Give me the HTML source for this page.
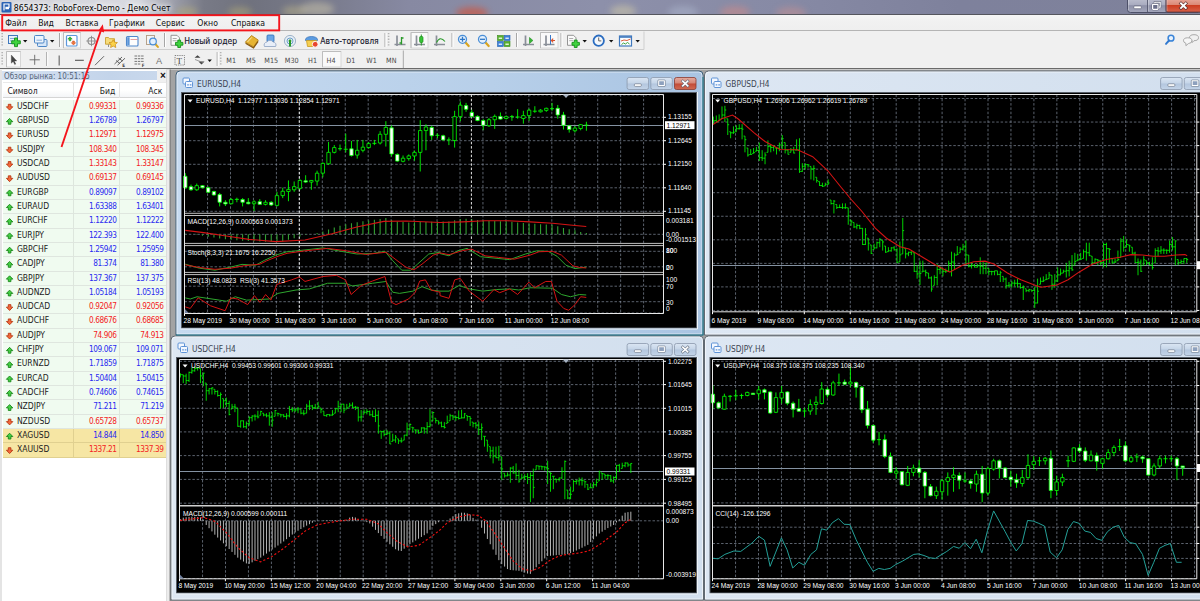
<!DOCTYPE html>
<html lang="ru"><head><meta charset="utf-8"><title>8654373: RoboForex-Demo - Демо Счет</title>
<style>
*{margin:0;padding:0;box-sizing:border-box}
html,body{width:1200px;height:601px;overflow:hidden;background:#f0f0f0}
body{position:relative;font-family:"DejaVu Sans Condensed","DejaVu Sans","Liberation Sans",sans-serif;font-size:8.53px;color:#000;-webkit-font-smoothing:antialiased}
#tbar{position:absolute;left:0;top:0;width:1200px;height:15px;background:linear-gradient(90deg,#d2d3da 0,#d8d9e0 11.5%,#9c9eaa 14.5%,#787a86 17%,#70727e 21%,#797b8c 27%,#8789a2 34%,#8d90aa 50%,#878aa5 65%,#7e819c 80%,#7f829b 100%);border-bottom:1.5px solid #55565e;overflow:hidden}
#tbar .blob{position:absolute;border-radius:50%;filter:blur(3px)}
#tbar .ttl{position:absolute;left:13.8px;top:2.1px;font-size:8.62px;line-height:12px;color:#000;white-space:nowrap;text-shadow:0 0 4px #fff,0 0 6px #fff,0 0 8px #fff}
#menu{position:absolute;left:0;top:15px;width:1200px;height:16px;background:linear-gradient(#f6f6f6,#f1f1f1 40%,#efefef);border-bottom:1px solid #b4b4b4}
#menu span{position:absolute;top:2.3px;font-size:8.65px;line-height:12px;color:#111;white-space:nowrap}
#tb{position:absolute;left:0;top:31px;width:1200px;height:38px;background:#f0f0f0;border-bottom:1px solid #6a6a6a}
.tl{position:absolute;font-size:8.53px;line-height:12px;color:#14142a;white-space:nowrap;-webkit-text-stroke:.12px #14142a}
.pl{position:absolute;top:54.2px;font-size:7px;line-height:10px;color:#4a4a4a;white-space:nowrap}
#mw{position:absolute;left:0;top:70px;width:166.5px;height:531px;background:#fff;border-left:2px solid #e4e4e4}
.mwh{position:absolute;left:0;top:.8px;width:155px;height:9.7px;background:linear-gradient(90deg,#d6e2f2,#c3d4ea 70%,#c9d8ec);overflow:hidden}
.mwh span{position:absolute;left:2px;top:-.2px;font-size:8px;line-height:11px;color:#56657a;white-space:nowrap}
.mwx{position:absolute;left:155px;top:-.5px;width:12px;height:12px;background:#f0f0f0;font-size:10px;line-height:12px;text-align:center;font-weight:bold;color:#111;font-family:"Liberation Sans",sans-serif}
.mwc{position:absolute;left:1px;top:11.5px;width:163.4px;height:16.5px;background:linear-gradient(#fff,#fff 50%,#f4f5f7);border-bottom:1px solid #d5d5d5;border-top:1px solid #e9e9e9}
.mwc span{position:absolute;top:3.3px;font-size:8.53px;line-height:11px;color:#222}
.mwc .c1{left:4.5px}
.mwc .c2{right:51px}
.mwc .c3{right:4px}
.mwc:before{content:"";position:absolute;left:69.5px;top:0;width:1px;height:15px;background:#e2e2e2}
.mwc:after{content:"";position:absolute;left:116px;top:0;width:1px;height:15px;background:#e2e2e2}
.r{position:absolute;left:1px;width:163.4px;height:14.3px;background:#f0fbf0;border-bottom:1px solid #dfe6df;font-size:8.53px;line-height:13.1px}
.r.gold{background:#f6e6a4;border-bottom-color:#e0d090}
.r span{position:absolute;top:0;white-space:nowrap}
.r .s{left:13.9px;color:#1c1c1c}
.r .b{right:50px}
.r .a{right:3px}
.r .b,.r .a{font-size:8.2px;letter-spacing:-.45px}
.r:before{content:"";position:absolute;left:69.5px;top:0;width:1px;height:14px;background:#dde6dd}
.r:after{content:"";position:absolute;left:116px;top:0;width:1px;height:14px;background:#dde6dd}
.r.gold:before,.r.gold:after{background:#e0d090}
.up .b,.up .a{color:#2a2af0}
.dn .b,.dn .a{color:#f32222}
#main{position:absolute;left:0;top:0;width:1200px;height:601px}
</style></head><body>
<div id="tbar"><div class="blob" style="left:176px;top:7px;width:22px;height:10px;background:#b4ab78;opacity:.55"></div><div class="blob" style="left:228px;top:7px;width:24px;height:10px;background:#b4ab78;opacity:.5"></div><div class="blob" style="left:282px;top:6px;width:24px;height:10px;background:#bdb58a;opacity:.5"></div><div class="blob" style="left:300px;top:2px;width:34px;height:14px;background:#d8d0b0;opacity:.45"></div><div class="blob" style="left:456px;top:7px;width:32px;height:12px;background:#c85a48;opacity:.75"></div><div class="blob" style="left:610px;top:5px;width:26px;height:12px;background:#cfc8a8;opacity:.55"></div><div class="blob" style="left:668px;top:6px;width:30px;height:12px;background:#a8b0c8;opacity:.6"></div><div class="blob" style="left:720px;top:6px;width:30px;height:12px;background:#c88a8a;opacity:.6"></div><div class="blob" style="left:776px;top:7px;width:30px;height:12px;background:#c89090;opacity:.5"></div><div class="ttl">8654373: RoboForex-Demo - Демо Счет</div></div>
<div id="menu">
<span style="left:5.2px">Файл</span>
<span style="left:38.2px">Вид</span>
<span style="left:65.6px">Вставка</span>
<span style="left:109.1px">Графики</span>
<span style="left:155.8px">Сервис</span>
<span style="left:197.3px">Окно</span>
<span style="left:230.9px">Справка</span>
</div>
<div id="tb"></div>
<div class="tl" style="left:184.3px;top:35px">Новый ордер</div>
<div class="tl" style="left:320.3px;top:35px">Авто-торговля</div>
<div id="mw">
<div class="mwh"><span>Обзор рынка: 10:51:15</span></div><div class="mwx">×</div>
<div class="mwc"><span class="c1">Символ</span><span class="c2">Бид</span><span class="c3">Аск</span></div>
<div class="r dn" style="top:29.8px"><span class="s">USDCHF</span><span class="b">0.99331</span><span class="a">0.99336</span></div>
<div class="r up" style="top:44.11px"><span class="s">GBPUSD</span><span class="b">1.26789</span><span class="a">1.26797</span></div>
<div class="r dn" style="top:58.42px"><span class="s">EURUSD</span><span class="b">1.12971</span><span class="a">1.12975</span></div>
<div class="r dn" style="top:72.73px"><span class="s">USDJPY</span><span class="b">108.340</span><span class="a">108.345</span></div>
<div class="r dn" style="top:87.04px"><span class="s">USDCAD</span><span class="b">1.33143</span><span class="a">1.33147</span></div>
<div class="r dn" style="top:101.35px"><span class="s">AUDUSD</span><span class="b">0.69137</span><span class="a">0.69145</span></div>
<div class="r up" style="top:115.66px"><span class="s">EURGBP</span><span class="b">0.89097</span><span class="a">0.89102</span></div>
<div class="r up" style="top:129.97px"><span class="s">EURAUD</span><span class="b">1.63388</span><span class="a">1.63401</span></div>
<div class="r up" style="top:144.28px"><span class="s">EURCHF</span><span class="b">1.12220</span><span class="a">1.12222</span></div>
<div class="r up" style="top:158.59px"><span class="s">EURJPY</span><span class="b">122.393</span><span class="a">122.400</span></div>
<div class="r up" style="top:172.9px"><span class="s">GBPCHF</span><span class="b">1.25942</span><span class="a">1.25959</span></div>
<div class="r up" style="top:187.21px"><span class="s">CADJPY</span><span class="b">81.374</span><span class="a">81.380</span></div>
<div class="r up" style="top:201.52px"><span class="s">GBPJPY</span><span class="b">137.367</span><span class="a">137.375</span></div>
<div class="r up" style="top:215.83px"><span class="s">AUDNZD</span><span class="b">1.05184</span><span class="a">1.05193</span></div>
<div class="r dn" style="top:230.14px"><span class="s">AUDCAD</span><span class="b">0.92047</span><span class="a">0.92056</span></div>
<div class="r dn" style="top:244.45px"><span class="s">AUDCHF</span><span class="b">0.68676</span><span class="a">0.68685</span></div>
<div class="r dn" style="top:258.76px"><span class="s">AUDJPY</span><span class="b">74.906</span><span class="a">74.913</span></div>
<div class="r up" style="top:273.07px"><span class="s">CHFJPY</span><span class="b">109.067</span><span class="a">109.071</span></div>
<div class="r up" style="top:287.38px"><span class="s">EURNZD</span><span class="b">1.71859</span><span class="a">1.71875</span></div>
<div class="r up" style="top:301.69px"><span class="s">EURCAD</span><span class="b">1.50404</span><span class="a">1.50415</span></div>
<div class="r up" style="top:316px"><span class="s">CADCHF</span><span class="b">0.74606</span><span class="a">0.74615</span></div>
<div class="r up" style="top:330.31px"><span class="s">NZDJPY</span><span class="b">71.211</span><span class="a">71.219</span></div>
<div class="r dn" style="top:344.62px"><span class="s">NZDUSD</span><span class="b">0.65728</span><span class="a">0.65737</span></div>
<div class="r up gold" style="top:358.93px"><span class="s">XAGUSD</span><span class="b">14.844</span><span class="a">14.850</span></div>
<div class="r dn gold" style="top:373.24px"><span class="s">XAUUSD</span><span class="b">1337.21</span><span class="a">1337.39</span></div>
</div>
<svg id="main" width="1200" height="601" viewBox="0 0 1200 601">
<defs><linearGradient id="gTClose" x1="0" y1="0" x2="0" y2="1"><stop offset="0" stop-color="#eab0a4"/><stop offset=".5" stop-color="#dc8a78"/><stop offset=".56" stop-color="#cc3c20"/><stop offset="1" stop-color="#d8624a"/></linearGradient><linearGradient id="gTBtn" x1="0" y1="0" x2="0" y2="1"><stop offset="0" stop-color="#c2c4d2"/><stop offset=".5" stop-color="#a9acc0"/><stop offset=".56" stop-color="#8e91a8"/><stop offset="1" stop-color="#a4a7bc"/></linearGradient></defs>
<defs>
<linearGradient id="gAct" x1="0" y1="0" x2="1" y2="0"><stop offset="0" stop-color="#c6daf0"/><stop offset=".6" stop-color="#b7cfe9"/><stop offset="1" stop-color="#a9c4e2"/></linearGradient>
<linearGradient id="gIn" x1="0" y1="0" x2="1" y2="0"><stop offset="0" stop-color="#dde7f3"/><stop offset="1" stop-color="#d2dfee"/></linearGradient>
<linearGradient id="gClose" x1="0" y1="0" x2="0" y2="1"><stop offset="0" stop-color="#e4aa9e"/><stop offset=".48" stop-color="#d58574"/><stop offset=".52" stop-color="#c24a36"/><stop offset="1" stop-color="#d06a52"/></linearGradient>
<linearGradient id="gBtn" x1="0" y1="0" x2="0" y2="1"><stop offset="0" stop-color="#dbe6f3"/><stop offset=".48" stop-color="#c5d5e8"/><stop offset=".52" stop-color="#b3c6de"/><stop offset="1" stop-color="#c3d4e8"/></linearGradient>
</defs>
<rect x="166.5" y="69.5" width="1034" height="532" fill="#a3a3a3"/>
<rect x="166.5" y="69.5" width="3.2" height="532" fill="#ececec"/>
<rect x="169.7" y="69.5" width="1" height="532" fill="#7a7a7a"/>
<path d="M171 600V340Q171 336 175 336H699.5Q703.5 336 703.5 340V600z" fill="url(#gIn)" stroke="#626a72" stroke-width="1"/>
<path d="M172 599V340.5Q172 337 175.5 337H699Q702.5 337 702.5 340.5V599z" fill="none" stroke="#fff" stroke-opacity=".55" stroke-width="1"/>
<rect x="176.5" y="357.5" width="520" height="235.5" fill="#000" stroke="#555c66" stroke-width="1"/>
<path d="M697.5 357v237h-522" stroke="#eef3f8" stroke-width="1" fill="none"/>
<rect x="178" y="343" width="6.5" height="6" rx="1" fill="#f4f8ff" stroke="#5f93d6" stroke-width="1"/>
<rect x="180.5" y="346.5" width="7" height="6" rx="1" fill="#f4f8ff" stroke="#5f93d6" stroke-width="1"/>
<path d="M182.2 349.8h1.6m1 0h1.6" stroke="#5f93d6" stroke-width="1.2"/>
<text x="192" y="351.8" font-size="8.3" fill="#3c4654" text-anchor="start" font-family="DejaVu Sans Condensed,DejaVu Sans,sans-serif">USDCHF,H4</text>
<rect x="674.5" y="343.5" width="21.5" height="12" rx="2" fill="url(#gBtn)" stroke="#8a98ac" stroke-width=".8"/>
<path d="M682.75 347.2l5 4.6m0 -4.6l-5 4.6" stroke="#5a6678" stroke-width="2.6" stroke-linecap="square"/>
<path d="M682.75 347.2l5 4.6m0 -4.6l-5 4.6" stroke="#fff" stroke-width="1.6" stroke-linecap="square"/>
<rect x="650.8" y="343.5" width="21.5" height="12" rx="2" fill="url(#gBtn)" stroke="#8a98ac" stroke-width=".8"/>
<rect x="658.55" y="346.7" width="6" height="5" rx=".6" fill="#8da0bd" stroke="#fff" stroke-width="1.3"/>
<rect x="657.75" y="345.9" width="7.6" height="6.6" rx="1" fill="none" stroke="#5a6678" stroke-width=".5"/>
<rect x="627.1" y="343.5" width="21.5" height="12" rx="2" fill="url(#gBtn)" stroke="#8a98ac" stroke-width=".8"/>
<rect x="634.35" y="349.8" width="7" height="2.6" rx="1" fill="#fff" stroke="#5a6678" stroke-width=".6"/>
<path d="M704.5 600V340Q704.5 336 708.5 336H1219.5Q1223.5 336 1223.5 340V600z" fill="url(#gIn)" stroke="#626a72" stroke-width="1"/>
<path d="M705.5 599V340.5Q705.5 337 709 337H1219Q1222.5 337 1222.5 340.5V599z" fill="none" stroke="#fff" stroke-opacity=".55" stroke-width="1"/>
<rect x="710" y="357.5" width="501" height="235.5" fill="#000" stroke="#555c66" stroke-width="1"/>
<path d="M1212 357v237h-503" stroke="#eef3f8" stroke-width="1" fill="none"/>
<rect x="711.5" y="343" width="6.5" height="6" rx="1" fill="#f4f8ff" stroke="#5f93d6" stroke-width="1"/>
<rect x="714" y="346.5" width="7" height="6" rx="1" fill="#f4f8ff" stroke="#5f93d6" stroke-width="1"/>
<path d="M715.7 349.8h1.6m1 0h1.6" stroke="#5f93d6" stroke-width="1.2"/>
<text x="725.5" y="351.8" font-size="8.3" fill="#3c4654" text-anchor="start" font-family="DejaVu Sans Condensed,DejaVu Sans,sans-serif">USDJPY,H4</text>
<rect x="1184.3" y="343.5" width="21.5" height="12" rx="2" fill="url(#gBtn)" stroke="#8a98ac" stroke-width=".8"/>
<rect x="1192.05" y="346.7" width="6" height="5" rx=".6" fill="#8da0bd" stroke="#fff" stroke-width="1.3"/>
<rect x="1191.25" y="345.9" width="7.6" height="6.6" rx="1" fill="none" stroke="#5a6678" stroke-width=".5"/>
<rect x="1160.6" y="343.5" width="21.5" height="12" rx="2" fill="url(#gBtn)" stroke="#8a98ac" stroke-width=".8"/>
<rect x="1167.85" y="349.8" width="7" height="2.6" rx="1" fill="#fff" stroke="#5a6678" stroke-width=".6"/>
<path d="M704.5 335V75Q704.5 71 708.5 71H1219.5Q1223.5 71 1223.5 75V335z" fill="url(#gIn)" stroke="#626a72" stroke-width="1"/>
<path d="M705.5 334V75.5Q705.5 72 709 72H1219Q1222.5 72 1222.5 75.5V334z" fill="none" stroke="#fff" stroke-opacity=".55" stroke-width="1"/>
<rect x="710" y="92.5" width="501" height="235.5" fill="#000" stroke="#555c66" stroke-width="1"/>
<path d="M1212 92v237h-503" stroke="#eef3f8" stroke-width="1" fill="none"/>
<rect x="711.5" y="78" width="6.5" height="6" rx="1" fill="#f4f8ff" stroke="#5f93d6" stroke-width="1"/>
<rect x="714" y="81.5" width="7" height="6" rx="1" fill="#f4f8ff" stroke="#5f93d6" stroke-width="1"/>
<path d="M715.7 84.8h1.6m1 0h1.6" stroke="#5f93d6" stroke-width="1.2"/>
<text x="725.5" y="86.8" font-size="8.3" fill="#3c4654" text-anchor="start" font-family="DejaVu Sans Condensed,DejaVu Sans,sans-serif">GBPUSD,H4</text>
<rect x="1184.3" y="77.5" width="21.5" height="12" rx="2" fill="url(#gBtn)" stroke="#8a98ac" stroke-width=".8"/>
<rect x="1192.05" y="80.7" width="6" height="5" rx=".6" fill="#8da0bd" stroke="#fff" stroke-width="1.3"/>
<rect x="1191.25" y="79.9" width="7.6" height="6.6" rx="1" fill="none" stroke="#5a6678" stroke-width=".5"/>
<rect x="1160.6" y="77.5" width="21.5" height="12" rx="2" fill="url(#gBtn)" stroke="#8a98ac" stroke-width=".8"/>
<rect x="1167.85" y="83.8" width="7" height="2.6" rx="1" fill="#fff" stroke="#5a6678" stroke-width=".6"/>
<path d="M176 335V75Q176 71 180 71H699Q703 71 703 75V335z" fill="url(#gAct)" stroke="#3f5f78" stroke-width="1"/>
<path d="M177 334V75.5Q177 72 180.5 72H698.5Q702 72 702 75.5V334z" fill="none" stroke="#fff" stroke-opacity=".55" stroke-width="1"/>
<path d="M176 335H703V77" fill="none" stroke="#2b7f90" stroke-width="1.2"/>
<rect x="181.5" y="92.5" width="515" height="235.5" fill="#000" stroke="#555c66" stroke-width="1"/>
<path d="M697.5 92v237h-517" stroke="#eef3f8" stroke-width="1" fill="none"/>
<rect x="183" y="78" width="6.5" height="6" rx="1" fill="#f4f8ff" stroke="#5f93d6" stroke-width="1"/>
<rect x="185.5" y="81.5" width="7" height="6" rx="1" fill="#f4f8ff" stroke="#5f93d6" stroke-width="1"/>
<path d="M187.2 84.8h1.6m1 0h1.6" stroke="#5f93d6" stroke-width="1.2"/>
<text x="197" y="86.8" font-size="8.3" fill="#3c4654" text-anchor="start" font-family="DejaVu Sans Condensed,DejaVu Sans,sans-serif">EURUSD,H4</text>
<rect x="674.5" y="77.5" width="21.5" height="12" rx="2" fill="url(#gClose)" stroke="#8a3a30" stroke-width=".8"/>
<path d="M682.75 81.2l5 4.6m0 -4.6l-5 4.6" stroke="#5a6678" stroke-width="2.6" stroke-linecap="square"/>
<path d="M682.75 81.2l5 4.6m0 -4.6l-5 4.6" stroke="#fff" stroke-width="1.6" stroke-linecap="square"/>
<rect x="650.8" y="77.5" width="21.5" height="12" rx="2" fill="url(#gBtn)" stroke="#8a98ac" stroke-width=".8"/>
<rect x="658.55" y="80.7" width="6" height="5" rx=".6" fill="#8da0bd" stroke="#fff" stroke-width="1.3"/>
<rect x="657.75" y="79.9" width="7.6" height="6.6" rx="1" fill="none" stroke="#5a6678" stroke-width=".5"/>
<rect x="627.1" y="77.5" width="21.5" height="12" rx="2" fill="url(#gBtn)" stroke="#8a98ac" stroke-width=".8"/>
<rect x="634.35" y="83.8" width="7" height="2.6" rx="1" fill="#fff" stroke="#5a6678" stroke-width=".6"/>
<g font-family='&quot;Liberation Sans&quot;,sans-serif'>
<path d="M202.55 359.5V578.8 M225.5 359.5V578.8 M248.45 359.5V578.8 M271.4 359.5V578.8 M294.35 359.5V578.8 M317.3 359.5V578.8 M340.25 359.5V578.8 M363.2 359.5V578.8 M386.15 359.5V578.8 M409.1 359.5V578.8 M432.05 359.5V578.8 M455 359.5V578.8 M477.95 359.5V578.8 M500.9 359.5V578.8 M523.85 359.5V578.8 M546.8 359.5V578.8 M569.75 359.5V578.8 M592.7 359.5V578.8 M615.65 359.5V578.8 M638.6 359.5V578.8" stroke="#8c98a8" stroke-width=".9" stroke-dasharray="2.5 1.8" fill="none" opacity=".72"/>
<path d="M179.5 361.3H663.5 M179.5 384.6H663.5 M179.5 408.3H663.5 M179.5 431.9H663.5 M179.5 455.6H663.5 M179.5 479.4H663.5 M179.5 503.2H663.5 M179.5 520.8H663.5 M179.5 578.5H663.5" stroke="#8c98a8" stroke-width=".9" stroke-dasharray="2.5 1.8" fill="none" opacity=".72"/>
<path d="M179.5 471.5H663.5" stroke="#8492a2" stroke-width="1"/>
<path d="M180.4 373.3V377.45 M180.4 375.37h-1.4 M180.4 374.64h1.4 M183.27 374.75V383.07 M183.27 374.75h-1.4 M183.27 376h1.4 M186.14 373.71V384.11 M186.14 376h-1.4 M186.14 380.48h1.4 M189.01 371.63V382.03 M189.01 380.48h-1.4 M189.01 372.38h1.4 M191.88 367.47V373.71 M191.88 372.38h-1.4 M191.88 370.82h1.4 M194.75 366.43V371.63 M194.75 370.82h-1.4 M194.75 368.34h1.4 M197.61 367.47V370.59 M197.61 368.34h-1.4 M197.61 367.65h1.4 M200.48 368.51V383.07 M200.48 368.51h-1.4 M200.48 375.9h1.4 M203.35 372.67V386.19 M203.35 375.9h-1.4 M203.35 373.18h1.4 M206.22 383.07V400.74 M206.22 383.07h-1.4 M206.22 390.73h1.4 M209.09 388.26V394.5 M209.09 390.73h-1.4 M209.09 388.7h1.4 M211.96 387.22V394.5 M211.96 388.7h-1.4 M211.96 387.88h1.4 M214.83 389.3V394.5 M214.83 389.3h-1.4 M214.83 391.51h1.4 M217.7 390.34V396.58 M217.7 391.51h-1.4 M217.7 395.5h1.4 M220.57 392.42V408.64 M220.57 395.5h-1.4 M220.57 394.43h1.4 M223.44 398.66V408.01 M223.44 398.66h-1.4 M223.44 400.75h1.4 M226.3 397.62V406.98 M226.3 400.75h-1.4 M226.3 403.49h1.4 M229.17 400.74V415.29 M229.17 403.49h-1.4 M229.17 414.53h1.4 M232.04 403.86V409.05 M232.04 409.05h-1.4 M232.04 406.86h1.4 M234.91 403.86V412.17 M234.91 406.86h-1.4 M234.91 407.16h1.4 M237.78 408.01V426.73 M237.78 408.01h-1.4 M237.78 426.28h1.4 M240.65 420.49V427.77 M240.65 426.28h-1.4 M240.65 420.83h1.4 M243.52 420.49V427.77 M243.52 420.83h-1.4 M243.52 426.74h1.4 M246.39 421.53V428.8 M246.39 426.74h-1.4 M246.39 423.64h1.4 M249.26 416.33V425.69 M249.26 423.64h-1.4 M249.26 417.68h1.4 M252.12 415.29V421.53 M252.12 417.68h-1.4 M252.12 416.03h1.4 M254.99 414.25V420.49 M254.99 416.03h-1.4 M254.99 416.18h1.4 M257.86 410.72V418.41 M257.86 416.18h-1.4 M257.86 417h1.4 M260.73 410.72V415.29 M260.73 415.29h-1.4 M260.73 411.54h1.4 M263.6 413.21V416.33 M263.6 413.21h-1.4 M263.6 415.03h1.4 M266.47 413.21V417.37 M266.47 415.03h-1.4 M266.47 415.87h1.4 M269.34 412.17V425.69 M269.34 415.87h-1.4 M269.34 417.2h1.4 M272.21 412.17V426.73 M272.21 417.2h-1.4 M272.21 420.14h1.4 M275.08 410.09V416.33 M275.08 416.33h-1.4 M275.08 410.49h1.4 M277.95 413.21V416.33 M277.95 413.21h-1.4 M277.95 413.4h1.4 M280.82 414.25V417.37 M280.82 414.25h-1.4 M280.82 414.89h1.4 M283.68 414.25V417.37 M283.68 414.89h-1.4 M283.68 416.37h1.4 M286.55 413.21V419.45 M286.55 416.37h-1.4 M286.55 415.88h1.4 M289.42 405.94V417.37 M289.42 415.88h-1.4 M289.42 409.53h1.4 M292.29 406.98V412.17 M292.29 409.53h-1.4 M292.29 410.02h1.4 M295.16 408.01V412.17 M295.16 410.02h-1.4 M295.16 409.9h1.4 M298.03 406.98V413.21 M298.03 409.9h-1.4 M298.03 408.84h1.4 M300.9 409.05V414.25 M300.9 409.05h-1.4 M300.9 413.18h1.4 M303.77 410.09V415.29 M303.77 413.18h-1.4 M303.77 413.73h1.4 M306.64 403.86V413.21 M306.64 413.21h-1.4 M306.64 406.14h1.4 M309.51 400.32V410.09 M309.51 406.14h-1.4 M309.51 405.94h1.4 M312.37 404.9V410.09 M312.37 405.94h-1.4 M312.37 407.63h1.4 M315.24 403.86V409.05 M315.24 407.63h-1.4 M315.24 408.41h1.4 M318.11 401.78V408.01 M318.11 408.01h-1.4 M318.11 406.33h1.4 M320.98 408.01V413.21 M320.98 408.01h-1.4 M320.98 409.51h1.4 M323.85 411.13V415.71 M323.85 411.13h-1.4 M323.85 415.62h1.4 M326.72 414.25V416.95 M326.72 415.62h-1.4 M326.72 414.57h1.4 M329.59 414.25V416.33 M329.59 414.57h-1.4 M329.59 415.12h1.4 M332.46 410.09V415.71 M332.46 415.12h-1.4 M332.46 414.34h1.4 M335.33 408.01V413.21 M335.33 413.21h-1.4 M335.33 408.8h1.4 M338.2 400.74V412.17 M338.2 408.8h-1.4 M338.2 406.33h1.4 M341.06 403.86V412.17 M341.06 406.33h-1.4 M341.06 404.18h1.4 M343.93 403.86V413.21 M343.93 404.18h-1.4 M343.93 410.11h1.4 M346.8 403.86V409.05 M346.8 409.05h-1.4 M346.8 407.83h1.4 M349.67 402.82V406.98 M349.67 406.98h-1.4 M349.67 405.2h1.4 M352.54 402.4V408.01 M352.54 405.2h-1.4 M352.54 407.32h1.4 M355.41 405.94V410.09 M355.41 407.32h-1.4 M355.41 407.24h1.4 M358.28 406.98V421.53 M358.28 407.24h-1.4 M358.28 417.09h1.4 M361.15 410.09V421.53 M361.15 417.09h-1.4 M361.15 416.89h1.4 M364.02 409.47V414.25 M364.02 414.25h-1.4 M364.02 412.24h1.4 M366.89 409.19V414.35 M366.89 412.24h-1.4 M366.89 411.55h1.4 M369.75 410.48V415.65 M369.75 411.55h-1.4 M369.75 414.82h1.4 M372.62 410.48V416.94 M372.62 414.82h-1.4 M372.62 416.58h1.4 M375.49 409.19V422.1 M375.49 416.58h-1.4 M375.49 415.31h1.4 M378.36 410.48V433.71 M378.36 415.31h-1.4 M378.36 425.91h1.4 M381.23 431.13V438.87 M381.23 431.13h-1.4 M381.23 431.6h1.4 M384.1 429.84V436.29 M384.1 431.6h-1.4 M384.1 434.36h1.4 M386.97 429.84V435 M386.97 434.36h-1.4 M386.97 433.18h1.4 M389.84 431.13V444.03 M389.84 433.18h-1.4 M389.84 443.94h1.4 M392.71 433.71V441.45 M392.71 441.45h-1.4 M392.71 440.07h1.4 M395.58 435V442.74 M395.58 440.07h-1.4 M395.58 437.2h1.4 M398.44 438.87V444.03 M398.44 438.87h-1.4 M398.44 440.86h1.4 M401.31 437.58V442.74 M401.31 440.86h-1.4 M401.31 441.03h1.4 M404.18 435V440.16 M404.18 440.16h-1.4 M404.18 435.12h1.4 M407.05 422.61V436.29 M407.05 435.12h-1.4 M407.05 428.93h1.4 M409.92 423.39V429.84 M409.92 428.93h-1.4 M409.92 424.47h1.4 M412.79 427.26V432.42 M412.79 427.26h-1.4 M412.79 427.86h1.4 M415.66 429.84V433.71 M415.66 429.84h-1.4 M415.66 430.07h1.4 M418.53 429.84V433.71 M418.53 430.07h-1.4 M418.53 432.81h1.4 M421.4 427.26V432.42 M421.4 432.42h-1.4 M421.4 427.93h1.4 M424.27 427.26V433.71 M424.27 427.93h-1.4 M424.27 428.86h1.4 M427.13 422.1V433.71 M427.13 428.86h-1.4 M427.13 426.64h1.4 M430 409.19V427.26 M430 426.64h-1.4 M430 424.94h1.4 M432.87 411.77V420.81 M432.87 420.81h-1.4 M432.87 412.5h1.4 M435.74 418.23V423.39 M435.74 418.23h-1.4 M435.74 420.54h1.4 M438.61 420.81V424.68 M438.61 420.81h-1.4 M438.61 422.93h1.4 M441.48 421.58V427.26 M441.48 422.93h-1.4 M441.48 426.6h1.4 M444.35 422.1V428.55 M444.35 426.6h-1.4 M444.35 427.38h1.4 M447.22 415.65V423.39 M447.22 423.39h-1.4 M447.22 422.33h1.4 M450.09 413.84V420.81 M450.09 420.81h-1.4 M450.09 415.78h1.4 M452.96 414.87V420.03 M452.96 415.78h-1.4 M452.96 417.01h1.4 M455.82 415.65V420.81 M455.82 417.01h-1.4 M455.82 417.5h1.4 M458.69 410.48V419.52 M458.69 417.5h-1.4 M458.69 418.47h1.4 M461.56 409.71V418.23 M461.56 418.23h-1.4 M461.56 417.87h1.4 M464.43 413.06V418.23 M464.43 417.87h-1.4 M464.43 413.84h1.4 M467.3 415.65V420.81 M467.3 415.65h-1.4 M467.3 416.55h1.4 M470.17 416.42V425.97 M470.17 416.55h-1.4 M470.17 418.63h1.4 M473.04 422.1V427.26 M473.04 422.1h-1.4 M473.04 423.3h1.4 M475.91 422.1V428.55 M475.91 423.3h-1.4 M475.91 425.23h1.4 M478.78 421.58V435 M478.78 425.23h-1.4 M478.78 429.49h1.4 M481.65 423.39V440.16 M481.65 429.49h-1.4 M481.65 427.79h1.4 M484.51 436.29V446.61 M484.51 436.29h-1.4 M484.51 436.33h1.4 M487.38 440.16V451.77 M487.38 440.16h-1.4 M487.38 445.03h1.4 M490.25 446.61V458.23 M490.25 446.61h-1.4 M490.25 450.9h1.4 M493.12 446.61V463.39 M493.12 450.9h-1.4 M493.12 456.11h1.4 M495.99 446.61V458.23 M495.99 456.11h-1.4 M495.99 457.68h1.4 M498.86 445.84V460.81 M498.86 457.68h-1.4 M498.86 456.17h1.4 M501.73 456.94V480.16 M501.73 456.94h-1.4 M501.73 468.91h1.4 M504.6 473.19V477.58 M504.6 473.19h-1.4 M504.6 475.9h1.4 M507.47 472.42V476.29 M507.47 475.9h-1.4 M507.47 475.04h1.4 M510.34 467.26V482.74 M510.34 475.04h-1.4 M510.34 468.09h1.4 M513.2 465.97V473.71 M513.2 468.09h-1.4 M513.2 472.93h1.4 M516.07 463.39V478.87 M516.07 472.93h-1.4 M516.07 475.46h1.4 M518.94 469.84V482.74 M518.94 475.46h-1.4 M518.94 481.12h1.4 M521.81 473.71V478.87 M521.81 478.87h-1.4 M521.81 477.83h1.4 M524.68 474.23V480.16 M524.68 477.83h-1.4 M524.68 476.55h1.4 M527.55 473.19V484.03 M527.55 476.55h-1.4 M527.55 477.52h1.4 M530.42 472.42V502.1 M530.42 477.52h-1.4 M530.42 475.49h1.4 M533.29 468.55V498.23 M533.29 475.49h-1.4 M533.29 487.37h1.4 M536.16 465.45V469.84 M536.16 469.84h-1.4 M536.16 465.72h1.4 M539.03 465.97V469.84 M539.03 465.97h-1.4 M539.03 466.23h1.4 M541.89 465.97V469.84 M541.89 466.23h-1.4 M541.89 466.78h1.4 M544.76 466.48V470.61 M544.76 466.78h-1.4 M544.76 467.15h1.4 M547.63 460.81V484.03 M547.63 467.15h-1.4 M547.63 468.7h1.4 M550.5 472.42V491.77 M550.5 472.42h-1.4 M550.5 473.44h1.4 M553.37 476.29V489.19 M553.37 476.29h-1.4 M553.37 476.29h1.4 M556.24 478.87V482.74 M556.24 478.87h-1.4 M556.24 479.46h1.4 M559.11 477.58V481.45 M559.11 479.46h-1.4 M559.11 477.97h1.4 M561.98 467.26V478.87 M561.98 477.97h-1.4 M561.98 471.48h1.4 M564.85 460.44V499.17 M564.85 471.48h-1.4 M564.85 461.43h1.4 M567.72 490.06V499.17 M567.72 490.06h-1.4 M567.72 498.02h1.4 M570.58 486.64V499.17 M570.58 498.02h-1.4 M570.58 494.33h1.4 M573.45 479.81V491.2 M573.45 491.2h-1.4 M573.45 481.5h1.4 M576.32 479.81V484.36 M576.32 481.5h-1.4 M576.32 480.96h1.4 M579.19 477.53V485.5 M579.19 480.96h-1.4 M579.19 480.3h1.4 M582.06 477.53V485.5 M582.06 480.3h-1.4 M582.06 480.43h1.4 M584.93 480.95V487.78 M584.93 480.95h-1.4 M584.93 481.78h1.4 M587.8 484.36V490.06 M587.8 484.36h-1.4 M587.8 489.2h1.4 M590.67 483.22V487.78 M590.67 487.78h-1.4 M590.67 487.75h1.4 M593.54 482.08V487.78 M593.54 487.75h-1.4 M593.54 484.74h1.4 M596.41 478.67V486.64 M596.41 484.74h-1.4 M596.41 482.52h1.4 M599.27 470.69V480.95 M599.27 480.95h-1.4 M599.27 471.58h1.4 M602.14 472.97V479.81 M602.14 472.97h-1.4 M602.14 473.67h1.4 M605.01 474.11V478.67 M605.01 474.11h-1.4 M605.01 475.67h1.4 M607.88 474.11V479.81 M607.88 475.67h-1.4 M607.88 475.62h1.4 M610.75 475.25V482.08 M610.75 475.62h-1.4 M610.75 480.91h1.4 M613.62 476.39V483.22 M613.62 480.91h-1.4 M613.62 477.49h1.4 M616.49 465V479.81 M616.49 477.49h-1.4 M616.49 465.34h1.4 M619.36 463.86V471.83 M619.36 465.34h-1.4 M619.36 471.44h1.4 M622.23 462.72V468.42 M622.23 468.42h-1.4 M622.23 465.73h1.4 M625.1 462.27V467.28 M625.1 465.73h-1.4 M625.1 463h1.4 M627.96 462.72V466.82 M627.96 463h-1.4 M627.96 464.95h1.4 M630.83 463.18V472.97 M630.83 464.95h-1.4 M630.83 463.44h1.4" stroke="#00ff00" stroke-width="1" fill="none" opacity=".82"/>
<rect x="179.5" y="504.4" width="484" height="2.6" fill="#000"/><path d="M179.5 505.7H663.5" stroke="#d0d0d0" stroke-width="1.5"/>
<path d="M180.4 520.8V519.18 M183.27 520.8V517.65 M186.14 520.8V517.23 M189.01 520.8V516.95 M191.88 520.8V516.66 M194.75 520.8V516.8 M197.61 520.8V517.08 M200.48 520.8V517.37 M203.35 520.8V519.67 M206.22 520.8V524.98 M209.09 520.8V528.21 M211.96 520.8V531.43 M214.83 520.8V534.66 M217.7 520.8V537.58 M220.57 520.8V540.45 M223.44 520.8V543.32 M226.3 520.8V546.19 M229.17 520.8V549.06 M232.04 520.8V551.93 M234.91 520.8V554.8 M237.78 520.8V557.67 M240.65 520.8V559.61 M243.52 520.8V561.52 M246.39 520.8V563.44 M249.26 520.8V563.89 M252.12 520.8V562.33 M254.99 520.8V560.76 M257.86 520.8V559.2 M260.73 520.8V557.6 M263.6 520.8V555.59 M266.47 520.8V553.58 M269.34 520.8V551.57 M272.21 520.8V549.56 M275.08 520.8V547.55 M277.95 520.8V545.55 M280.81 520.8V543.54 M283.68 520.8V541.47 M286.55 520.8V539.18 M289.42 520.8V536.88 M292.29 520.8V534.59 M295.16 520.8V532.44 M298.03 520.8V530.72 M300.9 520.8V529 M303.77 520.8V527.27 M306.64 520.8V525.64 M309.5 520.8V524.21 M312.37 520.8V522.77 M315.24 520.8V521.45 M323.85 520.8V520.35 M326.72 520.8V520.31 M329.59 520.8V520.26 M332.46 520.8V520.21 M335.33 520.8V520.16 M338.2 520.8V520.12 M341.06 520.8V520.07 M343.93 520.8V520.02 M346.8 520.8V519.73 M349.67 520.8V517.58 M352.54 520.8V516.89 M355.41 520.8V517.47 M358.28 520.8V519.28 M364.02 520.8V521.42 M366.88 520.8V522.14 M369.75 520.8V523.43 M372.62 520.8V526.66 M375.49 520.8V529.89 M378.36 520.8V533.09 M381.23 520.8V535.96 M384.1 520.8V538.83 M386.97 520.8V541.7 M389.84 520.8V544.24 M392.71 520.8V546.75 M395.58 520.8V549.26 M398.44 520.8V550.61 M401.31 520.8V550.99 M404.18 520.8V548.7 M407.05 520.8V546.4 M409.92 520.8V544.12 M412.79 520.8V542.33 M415.66 520.8V540.54 M418.53 520.8V538.74 M421.4 520.8V536.95 M424.26 520.8V535.16 M427.13 520.8V533.36 M430 520.8V529.75 M432.87 520.8V525.83 M435.74 520.8V524.11 M438.61 520.8V522.23 M450.09 520.8V518.47 M452.96 520.8V516.27 M455.82 520.8V514.07 M458.69 520.8V513.33 M461.56 520.8V512.66 M464.43 520.8V512.77 M467.3 520.8V513.44 M470.17 520.8V514.61 M473.04 520.8V517.91 M475.91 520.8V519.65 M481.64 520.8V527.79 M484.51 520.8V533.53 M487.38 520.8V538.96 M490.25 520.8V544.22 M493.12 520.8V549.5 M495.99 520.8V554.83 M498.86 520.8V560.15 M501.73 520.8V564.12 M504.6 520.8V566.58 M507.47 520.8V569.04 M510.34 520.8V569.98 M513.2 520.8V570.27 M516.07 520.8V570.56 M518.94 520.8V570.84 M521.81 520.8V571.62 M524.68 520.8V572.57 M527.55 520.8V573.53 M530.42 520.8V573.84 M533.29 520.8V570.56 M536.16 520.8V567.28 M539.02 520.8V564.15 M541.89 520.8V561.28 M544.76 520.8V558.41 M547.63 520.8V556.06 M550.5 520.8V555.77 M553.37 520.8V555.49 M556.24 520.8V555.2 M559.11 520.8V554.93 M561.98 520.8V554.71 M564.85 520.8V554.5 M567.72 520.8V554.23 M570.58 520.8V553.01 M573.45 520.8V551.79 M576.32 520.8V550.57 M579.19 520.8V549.16 M582.06 520.8V547.73 M584.93 520.8V546.29 M587.8 520.8V544.86 M590.67 520.8V542.12 M593.54 520.8V539.25 M596.41 520.8V536.39 M599.27 520.8V533.52 M602.14 520.8V531.66 M605.01 520.8V529.86 M607.88 520.8V528.07 M610.75 520.8V526.51 M613.62 520.8V525.01 M616.49 520.8V522.45 M619.36 520.8V519.25 M622.23 520.8V515.69 M625.1 520.8V512.72 M627.96 520.8V512.15 M630.83 520.8V511.7" stroke="#b4b4b4" stroke-width="1" fill="none"/>
<polyline points="180.18,520.43 192.62,518.85 203.94,517.49 215.25,521.56 226.56,532.87 237.87,547.58 249.19,557.76 260.5,561.83 271.81,556.63 283.12,548.71 294.43,539.66 305.75,530.61 317.06,524.95 328.37,522.69 351,519.3 366.83,519.3 378.14,523.82 387.19,532.87 396.24,540.79 407.56,546.9 418.87,545.32 430.18,537.4 439.23,530.61 440,529.92 446.83,523.09 458.22,516.94 469.61,514.66 478.72,515.57 485.56,520.81 494.67,533.34 503.78,547 512.89,560.67 522,568.64 531.12,570.92 540.23,567.51 549.34,560.67 558.45,556.12 567.56,554.29 576.67,553.38 588.06,551.1 599.45,544.73 608.56,537.89 617.68,531.06 624.51,523.09 630.21,519.67" fill="none" stroke="#f01010" stroke-width="1.1" stroke-dasharray="2.2 2" />
<path d="M179.5 359.5V578.8 H663.5 M663.5 359.5V578.8 M179.5 359.5H663.5" stroke="#e8e8e8" stroke-width="1" fill="none"/>
<path d="M179.5 578.8v2.4 M225.4 578.8v2.4 M271.3 578.8v2.4 M317.2 578.8v2.4 M363.1 578.8v2.4 M409 578.8v2.4 M454.9 578.8v2.4 M500.8 578.8v2.4 M546.7 578.8v2.4 M592.6 578.8v2.4" stroke="#fff" stroke-width="1" fill="none"/>
<path d="M663.5 361.3h2.5 M663.5 384.6h2.5 M663.5 408.3h2.5 M663.5 431.9h2.5 M663.5 455.6h2.5 M663.5 479.4h2.5 M663.5 503.2h2.5" stroke="#fff" stroke-width="1" fill="none"/>
<path d="M562.8 359.5h6.4l-3.2 3.6z" fill="#a8b4c4"/>
<path d="M179.8 574.5v4h4z" fill="#7080a0"/>
<path d="M182.6 364.6h5l-2.5 3z" fill="#fff"/>
<text x="191" y="368.2" font-size="6.65" fill="#fff" text-anchor="start" >USDCHF,H4&#160; 0.99453 0.99601 0.99306 0.99331</text>
<text x="668" y="363.6" font-size="6.65" fill="#fff" text-anchor="start" >1.02275</text>
<text x="668" y="387.1" font-size="6.65" fill="#fff" text-anchor="start" >1.01645</text>
<text x="668" y="410.8" font-size="6.65" fill="#fff" text-anchor="start" >1.01015</text>
<text x="668" y="434.6" font-size="6.65" fill="#fff" text-anchor="start" >1.00385</text>
<text x="668" y="458.1" font-size="6.65" fill="#fff" text-anchor="start" >0.99755</text>
<text x="668" y="481.9" font-size="6.65" fill="#fff" text-anchor="start" >0.99125</text>
<text x="668" y="505.8" font-size="6.65" fill="#fff" text-anchor="start" >0.98495</text>
<rect x="665" y="467.5" width="29.5" height="8" fill="#fff"/><text x="666.5" y="474.3" font-size="6.65" fill="#000" text-anchor="start" >0.99331</text>
<text x="183" y="516.2" font-size="6.65" fill="#fff" text-anchor="start" >MACD(12,26,9) 0.000599 0.000111</text>
<text x="666" y="514" font-size="6.65" fill="#fff" text-anchor="start" >0.000873</text>
<text x="666" y="522.8" font-size="6.65" fill="#fff" text-anchor="start" >0.00</text>
<text x="666" y="576.6" font-size="6.65" fill="#fff" text-anchor="start" >-0.003919</text>
<text x="178.5" y="587.8" font-size="6.65" fill="#fff" text-anchor="start" >8 May 2019</text>
<text x="224.4" y="587.8" font-size="6.65" fill="#fff" text-anchor="start" >10 May 20:00</text>
<text x="270.3" y="587.8" font-size="6.65" fill="#fff" text-anchor="start" >15 May 12:00</text>
<text x="316.2" y="587.8" font-size="6.65" fill="#fff" text-anchor="start" >20 May 04:00</text>
<text x="362.1" y="587.8" font-size="6.65" fill="#fff" text-anchor="start" >22 May 20:00</text>
<text x="408" y="587.8" font-size="6.65" fill="#fff" text-anchor="start" >27 May 12:00</text>
<text x="453.9" y="587.8" font-size="6.65" fill="#fff" text-anchor="start" >30 May 04:00</text>
<text x="499.8" y="587.8" font-size="6.65" fill="#fff" text-anchor="start" >3 Jun 20:00</text>
<text x="545.7" y="587.8" font-size="6.65" fill="#fff" text-anchor="start" >6 Jun 12:00</text>
<text x="591.6" y="587.8" font-size="6.65" fill="#fff" text-anchor="start" >11 Jun 04:00</text>
<path d="M735.55 359.5V578.8 M758.5 359.5V578.8 M781.45 359.5V578.8 M804.4 359.5V578.8 M827.35 359.5V578.8 M850.3 359.5V578.8 M873.25 359.5V578.8 M896.2 359.5V578.8 M919.15 359.5V578.8 M942.1 359.5V578.8 M965.05 359.5V578.8 M988 359.5V578.8 M1010.95 359.5V578.8 M1033.9 359.5V578.8 M1056.85 359.5V578.8 M1079.8 359.5V578.8 M1102.75 359.5V578.8 M1125.7 359.5V578.8 M1148.65 359.5V578.8 M1171.6 359.5V578.8 M1194.55 359.5V578.8" stroke="#8c98a8" stroke-width=".9" stroke-dasharray="2.5 1.8" fill="none" opacity=".72"/>
<path d="M712.5 361.3H1196.8 M712.5 385.5H1196.8 M712.5 408.7H1196.8 M712.5 431.9H1196.8 M712.5 455.6H1196.8 M712.5 479.4H1196.8 M712.5 502.9H1196.8 M712.5 527.2H1196.8 M712.5 543.5H1196.8 M712.5 558.4H1196.8 M712.5 578.5H1196.8" stroke="#8c98a8" stroke-width=".9" stroke-dasharray="2.5 1.8" fill="none" opacity=".72"/>
<path d="M712.5 468.5H1196.8" stroke="#8492a2" stroke-width="1"/>
<path d="M712.9 385.45V409.19 M718.63 401.45V408.68 M724.36 393.71V409.71 M730.09 395V401.45 M728.09 396.29H732.09 M735.82 389.84V400.16 M733.82 395.77H737.82 M741.54 393.71V398.87 M739.54 395.52H743.54 M747.27 391.65V396.29 M753 392.94V394.74 M758.73 385.97V399.39 M764.46 388.55V399.39 M770.19 391.13V413.84 M775.92 392.42V413.06 M781.65 385.97V403.52 M787.38 391.13V405.32 M793.11 401.45V417.45 M798.84 398.87V411.77 M804.56 407.9V416.94 M802.56 411H806.56 M810.29 399.39V414.87 M816.02 396.29V414.87 M821.75 382.1V404.55 M827.48 387.26V397.58 M833.21 380.81V395.77 M838.94 373.58V385.97 M836.94 382.87H840.94 M844.67 379.52V385.19 M850.4 366.61V387.26 M856.12 381.58V397.58 M861.85 385.97V413.06 M867.58 400.94V428.55 M873.31 424.68V442.74 M879.04 431.9V445.32 M877.04 439.65H881.04 M884.77 434.48V458.23 M890.5 452.55V473.19 M896.23 467.26V478.87 M901.96 471.13V485.32 M907.69 465.97V486.1 M913.41 464.68V476.29 M919.14 460.29V477.58 M924.87 471.13V498.23 M930.6 484.03V496.42 M936.33 486.61V499 M942.06 478.87V499.52 M947.79 472.42V495.65 M953.52 467.26V491.77 M959.25 472.42V489.19 M964.98 472.42V482.74 M962.98 480.94H966.98 M970.7 478.87V488.68 M976.43 470.61V491.77 M982.16 465.97V502.1 M987.89 466.48V495.65 M993.62 458.74V470.61 M999.35 459.52V478.35 M1005.08 467.26V478.35 M1010.81 470.61V486.61 M1016.54 473.71V487.9 M1022.27 469.84V486.61 M1027.99 454.35V478.87 M1033.72 456.16V469.84 M1039.45 456.94V465.97 M1037.45 460.81H1041.45 M1045.18 456.94V464.68 M1050.91 450.48V498.23 M1056.64 475.77V495.65 M1062.37 473.71V486.1 M1068.1 455.65V467.26 M1066.1 460.81H1070.1 M1073.83 447.39V462.1 M1079.56 444.03V453.06 M1085.28 447.39V462.1 M1091.01 450.48V461.32 M1096.74 452.55V470.61 M1102.47 457.71V468.55 M1108.2 449.19V459.52 M1113.93 445.32V456.16 M1119.66 438.87V451 M1117.66 446.61H1121.66 M1125.39 441.45V462.1 M1131.12 455.65V462.87 M1136.85 453.58V462.1 M1134.85 456.94H1138.85 M1142.58 455.65V462.87 M1148.3 458.23V475.77 M1154.03 463.39V476.29 M1159.76 455.65V468.03 M1165.49 455.65V463.39 M1163.49 458.74H1167.49 M1171.22 455.65V462.1 M1169.22 458.74H1173.22 M1176.95 456.94V480.16 M1182.68 465.97V475.77" stroke="#00ff00" stroke-width=".9" fill="none"/><path d="M722.66 396.29h3.4v12.9h-3.4z M745.57 392.42h3.4v3.1h-3.4z M757.03 389.84h3.4v3.87h-3.4z M774.22 397.58h3.4v14.71h-3.4z M779.95 392.42h3.4v5.68h-3.4z M808.59 404.55h3.4v6.45h-3.4z M814.32 402.23h3.4v2.32h-3.4z M820.05 389.06h3.4v14.45h-3.4z M831.51 382.87h3.4v12.13h-3.4z M848.7 382.1h3.4v1.81h-3.4z M894.53 471.13h3.4v2.06h-3.4z M905.99 472.42h3.4v12.9h-3.4z M911.71 468.03h3.4v4.39h-3.4z M934.63 491.26h3.4v4.39h-3.4z M940.36 480.68h3.4v11.1h-3.4z M946.09 477.58h3.4v3.87h-3.4z M951.82 475h3.4v2.58h-3.4z M974.73 474.23h3.4v9.81h-3.4z M986.19 468.55h3.4v24.52h-3.4z M991.92 460.81h3.4v8.26h-3.4z M1020.57 477.58h3.4v5.94h-3.4z M1026.29 465.45h3.4v12.13h-3.4z M1032.02 461.32h3.4v3.35h-3.4z M1043.48 458.23h3.4v2.58h-3.4z M1054.94 481.97h3.4v8.52h-3.4z M1060.67 477.58h3.4v4.39h-3.4z M1072.13 447.9h3.4v13.42h-3.4z M1089.31 455.13h3.4v5.68h-3.4z M1100.77 458.74h3.4v4.65h-3.4z M1106.5 452.55h3.4v6.19h-3.4z M1112.23 447.39h3.4v5.16h-3.4z M1129.42 457.71h3.4v3.61h-3.4z M1152.33 465.97h3.4v9.03h-3.4z M1158.06 458.74h3.4v7.23h-3.4z" stroke="#00ff00" stroke-width=".8" fill="#000"/><path d="M711.2 394.23h3.4v8.52h-3.4z M716.93 402.74h3.4v5.16h-3.4z M751.3 393.19h3.4v1.29h-3.4z M762.76 389.84h3.4v2.58h-3.4z M768.49 391.9h3.4v21.16h-3.4z M785.68 391.9h3.4v11.35h-3.4z M791.41 403.26h3.4v5.94h-3.4z M797.13 408.68h3.4v2.58h-3.4z M825.78 389.32h3.4v5.68h-3.4z M842.97 382.1h3.4v2.06h-3.4z M854.42 382.61h3.4v4.65h-3.4z M860.15 387.26h3.4v22.45h-3.4z M865.88 409.19h3.4v16.26h-3.4z M871.61 425.45h3.4v14.71h-3.4z M883.07 439.65h3.4v16.77h-3.4z M888.8 456.42h3.4v16h-3.4z M900.26 471.65h3.4v13.16h-3.4z M917.44 468.03h3.4v4.39h-3.4z M923.17 472.42h3.4v13.68h-3.4z M928.9 486.61h3.4v9.03h-3.4z M957.55 475.52h3.4v4.65h-3.4z M969 480.94h3.4v2.58h-3.4z M980.46 474.23h3.4v18.84h-3.4z M997.65 460.81h3.4v7.23h-3.4z M1003.38 468.03h3.4v9.55h-3.4z M1009.11 477.06h3.4v2.58h-3.4z M1014.84 479.65h3.4v3.1h-3.4z M1049.21 458.23h3.4v32.26h-3.4z M1077.86 447.9h3.4v3.1h-3.4z M1083.58 451h3.4v9.29h-3.4z M1095.04 455.65h3.4v5.68h-3.4z M1123.69 445.84h3.4v14.97h-3.4z M1140.88 456.94h3.4v1.81h-3.4z M1146.6 458.74h3.4v16.26h-3.4z M1175.25 458.74h3.4v7.23h-3.4z M1180.98 465.97h3.4v1.81h-3.4z" stroke="#00ff00" stroke-width=".8" fill="#fff"/>
<rect x="712.5" y="504.5" width="484.3" height="2.6" fill="#000"/><path d="M712.5 505.8H1196.8" stroke="#d0d0d0" stroke-width="1.5"/>
<polyline points="712.44,558.21 718.1,558.89 724.89,554.37 733.94,550.97 740.72,551.43 752.04,543.05 758.82,536.27 764.48,540.11 770.14,566.36 775.79,552.1 781.45,537.85 787.1,549.84 792.76,567.94 798.87,562.29 804.52,565.23 810.86,554.37 816.52,549.84 821.49,528.8 826.7,530.16 832.35,522.69 838.46,518.62 844.12,524.28 849.77,524.5 856.11,539.66 861.76,550.97 867.42,562.29 873.08,571.33 878.73,568.39 884.39,569.52 890.05,568.39 895.7,564.55 902.49,561.15 908.14,557.76 913.8,554.37 918.33,553.91 923.98,555.5 929.64,557.76 935.29,558.44 940,555.5 946.79,551.43 953.57,546.45 959.23,548.26 964.89,542.6 970.54,548.71 976.2,539.21 981.86,552.78 987.51,530.61 993.62,510.93 999.28,521.11 1004.93,531.29 1010.59,541.92 1016.24,550.97 1021.9,543.73 1027.56,520.43 1033.21,521.11 1038.87,523.37 1044.52,526.09 1050.18,552.1 1056.52,557.76 1062.17,549.84 1067.83,529.48 1073.48,521.56 1079.14,523.37 1084.8,531.06 1090.45,532.42 1096.11,538.53 1101.76,540.34 1107.42,531.74 1113.08,527.22 1118.73,525.41 1124.39,537.4 1130.05,542.6 1135.7,543.73 1142.49,554.37 1148.14,575.41 1153.8,562.29 1159.46,548.26 1165.11,545.32 1170.32,543.51 1176.43,562.29 1181.63,562.29" fill="none" stroke="#24a098" stroke-width="1" />
<path d="M712.5 359.5V578.8 H1196.8 M1196.8 359.5V578.8 M712.5 359.5H1196.8" stroke="#e8e8e8" stroke-width="1" fill="none"/>
<path d="M712.5 578.8v2.4 M758.4 578.8v2.4 M804.3 578.8v2.4 M850.2 578.8v2.4 M896.1 578.8v2.4 M942 578.8v2.4 M987.9 578.8v2.4 M1033.8 578.8v2.4 M1079.7 578.8v2.4 M1125.6 578.8v2.4 M1171.5 578.8v2.4" stroke="#fff" stroke-width="1" fill="none"/>
<path d="M1196.8 361.3h2.5 M1196.8 385.5h2.5 M1196.8 408.7h2.5 M1196.8 431.9h2.5 M1196.8 455.6h2.5 M1196.8 479.4h2.5 M1196.8 502.9h2.5 M1196.8 527.2h2.5 M1196.8 543.5h2.5 M1196.8 558.4h2.5" stroke="#fff" stroke-width="1" fill="none"/>
<rect x="1197" y="464" width="4" height="8" fill="#fff"/>
<path d="M715.2 364.6h5l-2.5 3z" fill="#fff"/>
<text x="723.5" y="368.2" font-size="6.65" fill="#fff" text-anchor="start" >USDJPY,H4&#160; 108.375 108.375 108.235 108.340</text>
<text x="715.5" y="516.2" font-size="6.65" fill="#fff" text-anchor="start" >CCI(14) -126.1296</text>
<text x="711.5" y="587.8" font-size="6.65" fill="#fff" text-anchor="start" >24 May 2019</text>
<text x="757.4" y="587.8" font-size="6.65" fill="#fff" text-anchor="start" >28 May 00:00</text>
<text x="803.3" y="587.8" font-size="6.65" fill="#fff" text-anchor="start" >29 May 08:00</text>
<text x="849.2" y="587.8" font-size="6.65" fill="#fff" text-anchor="start" >30 May 16:00</text>
<text x="895.1" y="587.8" font-size="6.65" fill="#fff" text-anchor="start" >3 Jun 00:00</text>
<text x="941" y="587.8" font-size="6.65" fill="#fff" text-anchor="start" >4 Jun 08:00</text>
<text x="986.9" y="587.8" font-size="6.65" fill="#fff" text-anchor="start" >5 Jun 16:00</text>
<text x="1032.8" y="587.8" font-size="6.65" fill="#fff" text-anchor="start" >7 Jun 00:00</text>
<text x="1078.7" y="587.8" font-size="6.65" fill="#fff" text-anchor="start" >10 Jun 08:00</text>
<text x="1124.6" y="587.8" font-size="6.65" fill="#fff" text-anchor="start" >11 Jun 16:00</text>
<text x="1170.5" y="587.8" font-size="6.65" fill="#fff" text-anchor="start" >13 Jun 00:00</text>
<path d="M735.55 94.5V311.8 M758.5 94.5V311.8 M781.45 94.5V311.8 M804.4 94.5V311.8 M827.35 94.5V311.8 M850.3 94.5V311.8 M873.25 94.5V311.8 M896.2 94.5V311.8 M919.15 94.5V311.8 M942.1 94.5V311.8 M965.05 94.5V311.8 M988 94.5V311.8 M1010.95 94.5V311.8 M1033.9 94.5V311.8 M1056.85 94.5V311.8 M1079.8 94.5V311.8 M1102.75 94.5V311.8 M1125.7 94.5V311.8 M1148.65 94.5V311.8 M1171.6 94.5V311.8 M1194.55 94.5V311.8" stroke="#8c98a8" stroke-width=".9" stroke-dasharray="2.5 1.8" fill="none" opacity=".72"/>
<path d="M712.5 98.5H1196.8 M712.5 122.05H1196.8 M712.5 145.6H1196.8 M712.5 169.15H1196.8 M712.5 192.7H1196.8 M712.5 216.25H1196.8 M712.5 239.8H1196.8 M712.5 263.35H1196.8 M712.5 286.9H1196.8 M712.5 310.45H1196.8" stroke="#8c98a8" stroke-width=".9" stroke-dasharray="2.5 1.8" fill="none" opacity=".72"/>
<path d="M712.5 265.5H1196.8" stroke="#8492a2" stroke-width="1"/>
<path d="M713.4 116.59V124.17 M713.4 120.38h-1.4 M713.4 120.59h1.4 M716.27 115.5V122 M716.27 120.59h-1.4 M716.27 121.86h1.4 M719.14 114.42V120.92 M719.14 120.92h-1.4 M719.14 120.03h1.4 M722.01 106.4V118.75 M722.01 118.75h-1.4 M722.01 115h1.4 M724.88 105.75V122 M724.88 115h-1.4 M724.88 110h1.4 M727.75 118.75V135.01 M727.75 118.75h-1.4 M727.75 124.71h1.4 M730.61 131.76V138.26 M730.61 131.76h-1.4 M730.61 132.84h1.4 M733.48 126.34V133.92 M733.48 132.84h-1.4 M733.48 132.19h1.4 M736.35 125.25V131.76 M736.35 131.76h-1.4 M736.35 128.72h1.4 M739.22 124.17V129.59 M739.22 128.72h-1.4 M739.22 128.39h1.4 M742.09 124.17V139.34 M742.09 128.39h-1.4 M742.09 129.17h1.4 M744.96 136.09V152.34 M744.96 136.09h-1.4 M744.96 139.71h1.4 M747.83 148.01V156.67 M747.83 148.01h-1.4 M747.83 155.04h1.4 M750.7 149.09V154.51 M750.7 154.51h-1.4 M750.7 154.43h1.4 M753.57 148.01V153.42 M753.57 153.42h-1.4 M753.57 152.63h1.4 M756.44 146.92V151.26 M756.44 151.26h-1.4 M756.44 150.42h1.4 M759.3 142.59V161.01 M759.3 150.42h-1.4 M759.3 157.66h1.4 M762.17 150.17V161.01 M762.17 157.66h-1.4 M762.17 158.19h1.4 M765.04 152.34V164.26 M765.04 158.19h-1.4 M765.04 155.04h1.4 M767.91 140.42V152.34 M767.91 152.34h-1.4 M767.91 146.59h1.4 M770.78 144.76V152.34 M770.78 146.59h-1.4 M770.78 147.45h1.4 M773.65 145.84V151.26 M773.65 147.45h-1.4 M773.65 146h1.4 M776.52 148.01V154.51 M776.52 148.01h-1.4 M776.52 148.19h1.4 M779.39 142.59V151.26 M779.39 148.19h-1.4 M779.39 145.01h1.4 M782.26 135.01V149.09 M782.26 145.01h-1.4 M782.26 138.66h1.4 M785.13 142.59V153.42 M785.13 142.59h-1.4 M785.13 150.09h1.4 M787.99 149.09V154.51 M787.99 150.09h-1.4 M787.99 154.27h1.4 M790.86 148.01V152.34 M790.86 152.34h-1.4 M790.86 149.94h1.4 M793.73 146.92V153.42 M793.73 149.94h-1.4 M793.73 153.01h1.4 M796.6 139.34V150.17 M796.6 150.17h-1.4 M796.6 150.04h1.4 M799.47 138.26V172.93 M799.47 150.04h-1.4 M799.47 171.37h1.4 M802.34 163.17V171.84 M802.34 171.37h-1.4 M802.34 166.33h1.4 M805.21 163.17V169.67 M805.21 166.33h-1.4 M805.21 164.61h1.4 M808.08 164.26V167.51 M808.08 164.61h-1.4 M808.08 165h1.4 M810.95 166.42V179.43 M810.95 166.42h-1.4 M810.95 168.98h1.4 M813.82 165.34V180.51 M813.82 168.98h-1.4 M813.82 168.44h1.4 M816.68 177.26V182.68 M816.68 177.26h-1.4 M816.68 180.64h1.4 M819.55 181.59V185.93 M819.55 181.59h-1.4 M819.55 185.49h1.4 M822.42 182.68V187.01 M822.42 185.49h-1.4 M822.42 186.32h1.4 M825.29 182.68V185.93 M825.29 185.93h-1.4 M825.29 184.23h1.4 M828.16 179.43V184.84 M828.16 184.23h-1.4 M828.16 182.96h1.4 M831.03 200V204.49 M831.03 200h-1.4 M831.03 203.59h1.4 M833.9 200V213.48 M833.9 203.59h-1.4 M833.9 201.14h1.4 M836.77 204.49V208.99 M836.77 204.49h-1.4 M836.77 207.46h1.4 M839.64 204.49V207.87 M839.64 207.46h-1.4 M839.64 207.56h1.4 M842.51 203.37V208.99 M842.51 207.56h-1.4 M842.51 207.77h1.4 M845.37 203.37V208.99 M845.37 207.77h-1.4 M845.37 207.59h1.4 M848.24 207.87V224.72 M848.24 207.87h-1.4 M848.24 215.92h1.4 M851.11 220.22V225.84 M851.11 220.22h-1.4 M851.11 221.23h1.4 M853.98 222.47V228.09 M853.98 222.47h-1.4 M853.98 226.91h1.4 M856.85 223.6V229.21 M856.85 226.91h-1.4 M856.85 225.46h1.4 M859.72 224.72V229.21 M859.72 225.46h-1.4 M859.72 228.32h1.4 M862.59 228.09V244.94 M862.59 228.32h-1.4 M862.59 244.47h1.4 M865.46 228.09V244.94 M865.46 244.47h-1.4 M865.46 234.76h1.4 M868.33 238.2V250.56 M868.33 238.2h-1.4 M868.33 243.16h1.4 M871.2 244.94V253.93 M871.2 244.94h-1.4 M871.2 253.45h1.4 M874.06 243.82V249.44 M874.06 249.44h-1.4 M874.06 247.89h1.4 M876.93 241.57V248.31 M876.93 247.89h-1.4 M876.93 242.72h1.4 M879.8 238.2V247.19 M879.8 242.72h-1.4 M879.8 239.34h1.4 M882.67 240.45V250.56 M882.67 240.45h-1.4 M882.67 241.98h1.4 M885.54 246.07V252.81 M885.54 246.07h-1.4 M885.54 252.17h1.4 M888.41 247.19V251.69 M888.41 251.69h-1.4 M888.41 250.82h1.4 M891.28 247.19V251.69 M891.28 250.82h-1.4 M891.28 247.85h1.4 M894.15 246.07V250.56 M894.15 247.85h-1.4 M894.15 249.78h1.4 M897.02 248.31V262.92 M897.02 249.78h-1.4 M897.02 262.63h1.4 M899.89 241.57V261.8 M899.89 261.8h-1.4 M899.89 254.87h1.4 M902.75 217.98V253.93 M902.75 253.93h-1.4 M902.75 230.58h1.4 M905.62 248.31V258.43 M905.62 248.31h-1.4 M905.62 253.86h1.4 M908.49 251.69V256.18 M908.49 253.86h-1.4 M908.49 252.27h1.4 M911.36 251.69V255.06 M911.36 252.27h-1.4 M911.36 251.73h1.4 M914.23 252.81V271.91 M914.23 252.81h-1.4 M914.23 271.35h1.4 M917.1 265.17V278.65 M917.1 271.35h-1.4 M917.1 273.93h1.4 M919.97 260.67V284.94 M919.97 273.93h-1.4 M919.97 273.45h1.4 M922.84 260.67V271.91 M922.84 271.91h-1.4 M922.84 271.16h1.4 M925.71 269.66V276.4 M925.71 271.16h-1.4 M925.71 272.59h1.4 M928.58 273.03V278.65 M928.58 273.03h-1.4 M928.58 277.93h1.4 M931.44 276.4V291.69 M931.44 277.93h-1.4 M931.44 289.03h1.4 M934.31 275.28V285.39 M934.31 285.39h-1.4 M934.31 277.42h1.4 M937.18 264.04V285.39 M937.18 277.42h-1.4 M937.18 269.42h1.4 M940.05 266.29V274.16 M940.05 269.42h-1.4 M940.05 268.6h1.4 M942.92 269.66V276.4 M942.92 269.66h-1.4 M942.92 271.28h1.4 M945.79 268.54V273.03 M945.79 271.28h-1.4 M945.79 271.17h1.4 M948.66 260.67V271.91 M948.66 271.17h-1.4 M948.66 263.59h1.4 M951.53 251.69V276.4 M951.53 263.59h-1.4 M951.53 262.04h1.4 M954.4 252.81V269.66 M954.4 262.04h-1.4 M954.4 255.02h1.4 M957.27 246.07V255.06 M957.27 255.02h-1.4 M957.27 254.25h1.4 M960.13 247.19V252.81 M960.13 252.81h-1.4 M960.13 249.18h1.4 M963 243.82V250.56 M963 249.18h-1.4 M963 246.91h1.4 M965.87 240.45V265.17 M965.87 246.91h-1.4 M965.87 254.87h1.4 M968.74 255.06V267.42 M968.74 255.06h-1.4 M968.74 266.23h1.4 M971.61 262.92V268.54 M971.61 266.23h-1.4 M971.61 265.28h1.4 M974.48 264.04V267.42 M974.48 265.28h-1.4 M974.48 267.14h1.4 M977.35 264.04V267.42 M977.35 267.14h-1.4 M977.35 265.74h1.4 M980.22 257.3V274.16 M980.22 265.74h-1.4 M980.22 266.27h1.4 M983.09 261.8V274.16 M983.09 266.27h-1.4 M983.09 268.27h1.4 M985.96 262.92V274.16 M985.96 268.27h-1.4 M985.96 263.13h1.4 M988.82 268.54V275.28 M988.82 268.54h-1.4 M988.82 271.51h1.4 M991.69 270.79V275.28 M991.69 271.51h-1.4 M991.69 271.61h1.4 M994.56 270.79V275.28 M994.56 271.61h-1.4 M994.56 270.8h1.4 M997.43 270.79V275.28 M997.43 270.8h-1.4 M997.43 274.38h1.4 M1000.3 270.79V282.02 M1000.3 274.38h-1.4 M1000.3 272.72h1.4 M1003.17 276.4V282.02 M1003.17 276.4h-1.4 M1003.17 279.06h1.4 M1006.04 277.53V288.76 M1006.04 279.06h-1.4 M1006.04 285.68h1.4 M1008.91 282.02V287.64 M1008.91 285.68h-1.4 M1008.91 285.15h1.4 M1011.78 280.9V287.64 M1011.78 285.15h-1.4 M1011.78 283.1h1.4 M1014.65 279.78V286.52 M1014.65 283.1h-1.4 M1014.65 283.27h1.4 M1017.51 278.65V287.64 M1017.51 283.27h-1.4 M1017.51 283.64h1.4 M1020.38 283.15V288.76 M1020.38 283.64h-1.4 M1020.38 287.55h1.4 M1023.25 285.39V300 M1023.25 287.55h-1.4 M1023.25 286.94h1.4 M1026.12 288.76V292.13 M1026.12 288.76h-1.4 M1026.12 290.65h1.4 M1028.99 288.76V292.13 M1028.99 290.65h-1.4 M1028.99 289.6h1.4 M1031.86 289.89V292.13 M1031.86 289.89h-1.4 M1031.86 290.51h1.4 M1034.73 286.52V307.87 M1034.73 290.51h-1.4 M1034.73 303h1.4 M1037.6 278.65V303.37 M1037.6 303h-1.4 M1037.6 291.2h1.4 M1040.47 277.53V284.27 M1040.47 284.27h-1.4 M1040.47 281.32h1.4 M1043.34 276.4V282.02 M1043.34 281.32h-1.4 M1043.34 280.67h1.4 M1046.2 274.16V279.78 M1046.2 279.78h-1.4 M1046.2 279.28h1.4 M1049.07 271.91V278.65 M1049.07 278.65h-1.4 M1049.07 274.9h1.4 M1051.94 275.28V289.89 M1051.94 275.28h-1.4 M1051.94 284.23h1.4 M1054.81 274.16V287.64 M1054.81 284.23h-1.4 M1054.81 280.97h1.4 M1057.68 267.42V282.02 M1057.68 280.97h-1.4 M1057.68 274.9h1.4 M1060.55 268.54V275.28 M1060.55 274.9h-1.4 M1060.55 273.21h1.4 M1063.42 269.66V273.03 M1063.42 273.03h-1.4 M1063.42 271.19h1.4 M1066.29 262.92V277.53 M1066.29 271.19h-1.4 M1066.29 270.71h1.4 M1069.16 260.67V276.4 M1069.16 270.71h-1.4 M1069.16 268.19h1.4 M1072.03 255.06V270.79 M1072.03 268.19h-1.4 M1072.03 269.87h1.4 M1074.89 252.81V265.17 M1074.89 265.17h-1.4 M1074.89 261.45h1.4 M1077.76 253.93V260.67 M1077.76 260.67h-1.4 M1077.76 259.84h1.4 M1080.63 252.81V259.55 M1080.63 259.55h-1.4 M1080.63 259.16h1.4 M1083.5 249.44V258.43 M1083.5 258.43h-1.4 M1083.5 251.77h1.4 M1086.37 242.7V260.67 M1086.37 251.77h-1.4 M1086.37 252.76h1.4 M1089.24 242.7V256.18 M1089.24 252.76h-1.4 M1089.24 255.41h1.4 M1092.11 256.18V264.04 M1092.11 256.18h-1.4 M1092.11 262.79h1.4 M1094.98 258.43V264.04 M1094.98 262.79h-1.4 M1094.98 259.2h1.4 M1097.85 259.55V265.17 M1097.85 259.55h-1.4 M1097.85 260.23h1.4 M1100.72 260.67V265.17 M1100.72 260.67h-1.4 M1100.72 262.66h1.4 M1103.58 242.7V267.42 M1103.58 262.66h-1.4 M1103.58 244.49h1.4 M1106.45 242.7V267.42 M1106.45 244.49h-1.4 M1106.45 248.65h1.4 M1109.32 248.31V262.92 M1109.32 248.65h-1.4 M1109.32 249.38h1.4 M1112.19 258.43V264.04 M1112.19 258.43h-1.4 M1112.19 262.19h1.4 M1115.06 258.43V262.92 M1115.06 262.19h-1.4 M1115.06 261.95h1.4 M1117.93 250.56V260.67 M1117.93 260.67h-1.4 M1117.93 259.63h1.4 M1120.8 238.2V257.3 M1120.8 257.3h-1.4 M1120.8 241.15h1.4 M1123.67 235.96V251.69 M1123.67 241.15h-1.4 M1123.67 247.22h1.4 M1126.54 239.33V247.19 M1126.54 247.19h-1.4 M1126.54 244.52h1.4 M1129.4 244.94V251.69 M1129.4 244.94h-1.4 M1129.4 245.91h1.4 M1132.27 247.19V253.93 M1132.27 247.19h-1.4 M1132.27 253.14h1.4 M1135.14 251.69V262.92 M1135.14 253.14h-1.4 M1135.14 262.56h1.4 M1138.01 258.43V275.28 M1138.01 262.56h-1.4 M1138.01 262.13h1.4 M1140.88 259.55V271.91 M1140.88 262.13h-1.4 M1140.88 271.32h1.4 M1143.75 256.18V265.17 M1143.75 265.17h-1.4 M1143.75 259.76h1.4 M1146.62 260.67V265.17 M1146.62 260.67h-1.4 M1146.62 262.86h1.4 M1149.49 261.8V265.17 M1149.49 262.86h-1.4 M1149.49 265.13h1.4 M1152.36 257.3V269.66 M1152.36 265.13h-1.4 M1152.36 267.59h1.4 M1155.23 248.31V262.92 M1155.23 262.92h-1.4 M1155.23 250.67h1.4 M1158.09 247.19V256.18 M1158.09 250.67h-1.4 M1158.09 251.07h1.4 M1160.96 246.07V253.93 M1160.96 251.07h-1.4 M1160.96 250.12h1.4 M1163.83 248.31V253.93 M1163.83 250.12h-1.4 M1163.83 250.22h1.4 M1166.7 249.44V253.93 M1166.7 250.22h-1.4 M1166.7 250.32h1.4 M1169.57 240.45V252.81 M1169.57 250.32h-1.4 M1169.57 244.39h1.4 M1172.44 237.08V250.56 M1172.44 244.39h-1.4 M1172.44 246.82h1.4 M1175.31 240.45V265.17 M1175.31 246.82h-1.4 M1175.31 240.93h1.4 M1178.18 259.55V265.17 M1178.18 259.55h-1.4 M1178.18 262.66h1.4 M1181.05 259.55V264.04 M1181.05 262.66h-1.4 M1181.05 261.53h1.4 M1183.92 258.43V264.04 M1183.92 261.53h-1.4 M1183.92 258.53h1.4 M1186.78 257.98V262.92 M1186.78 258.53h-1.4 M1186.78 259.62h1.4" stroke="#00ff00" stroke-width="1" fill="none" opacity=".82"/>
<polyline points="713,124.6 721.67,118.75 732.5,115.07 737.92,118.75 754.17,132.84 765.01,141.51 780.17,149.52 797.51,149.74 812.68,156.67 827.84,170.76 840.85,187.01 851.68,200.01 861.8,211.24 875.28,228.09 886.52,238.2 900,246.74 908.99,248.99 924.72,258.43 935.96,265.17 949.44,271.91 950.11,271.91 962.47,265.17 973.71,261.8 984.94,261.12 993.93,264.04 1007.42,273.03 1020.9,279.78 1034.38,284.94 1041.12,287.19 1056.85,284.94 1068.09,279.78 1079.33,271.91 1092.81,264.04 1106.29,259.55 1119.78,257.3 1131.01,254.61 1142.25,255.06 1153.48,256.18 1164.72,256.18 1175.96,255.06 1184.94,254.61 1187.19,255.73" fill="none" stroke="#d41414" stroke-width="1.1" />
<path d="M712.5 94.5V311.8 H1196.8 M1196.8 94.5V311.8 M712.5 94.5H1196.8" stroke="#e8e8e8" stroke-width="1" fill="none"/>
<path d="M712.5 311.8v2.4 M758.4 311.8v2.4 M804.3 311.8v2.4 M850.2 311.8v2.4 M896.1 311.8v2.4 M942 311.8v2.4 M987.9 311.8v2.4 M1033.8 311.8v2.4 M1079.7 311.8v2.4 M1125.6 311.8v2.4 M1171.5 311.8v2.4" stroke="#fff" stroke-width="1" fill="none"/>
<path d="M1196.8 122.05h2.5 M1196.8 145.6h2.5 M1196.8 169.15h2.5 M1196.8 192.7h2.5 M1196.8 216.25h2.5 M1196.8 239.8h2.5 M1196.8 263.35h2.5 M1196.8 286.9h2.5 M1196.8 310.45h2.5" stroke="#fff" stroke-width="1" fill="none"/>
<rect x="1197" y="261.2" width="4" height="8" fill="#fff"/>
<path d="M715.2 99.6h5l-2.5 3z" fill="#fff"/>
<text x="723.5" y="103.2" font-size="6.65" fill="#fff" text-anchor="start" >GBPUSD,H4&#160; 1.26906 1.26962 1.26619 1.26789</text>
<text x="711.5" y="322.6" font-size="6.65" fill="#fff" text-anchor="start" >6 May 2019</text>
<text x="757.4" y="322.6" font-size="6.65" fill="#fff" text-anchor="start" >9 May 08:00</text>
<text x="803.3" y="322.6" font-size="6.65" fill="#fff" text-anchor="start" >14 May 00:00</text>
<text x="849.2" y="322.6" font-size="6.65" fill="#fff" text-anchor="start" >16 May 16:00</text>
<text x="895.1" y="322.6" font-size="6.65" fill="#fff" text-anchor="start" >21 May 08:00</text>
<text x="941" y="322.6" font-size="6.65" fill="#fff" text-anchor="start" >24 May 00:00</text>
<text x="986.9" y="322.6" font-size="6.65" fill="#fff" text-anchor="start" >28 May 16:00</text>
<text x="1032.8" y="322.6" font-size="6.65" fill="#fff" text-anchor="start" >31 May 08:00</text>
<text x="1078.7" y="322.6" font-size="6.65" fill="#fff" text-anchor="start" >5 Jun 00:00</text>
<text x="1124.6" y="322.6" font-size="6.65" fill="#fff" text-anchor="start" >7 Jun 16:00</text>
<text x="1170.5" y="322.6" font-size="6.65" fill="#fff" text-anchor="start" >12 Jun 08:00</text>
<path d="M207.55 94.5V313.5 M230.5 94.5V313.5 M253.45 94.5V313.5 M276.4 94.5V313.5 M299.35 94.5V313.5 M322.3 94.5V313.5 M345.25 94.5V313.5 M368.2 94.5V313.5 M391.15 94.5V313.5 M414.1 94.5V313.5 M437.05 94.5V313.5 M460 94.5V313.5 M482.95 94.5V313.5 M505.9 94.5V313.5 M528.85 94.5V313.5 M551.8 94.5V313.5 M574.75 94.5V313.5 M597.7 94.5V313.5 M620.65 94.5V313.5 M643.6 94.5V313.5" stroke="#8c98a8" stroke-width=".9" stroke-dasharray="2.5 1.8" fill="none" opacity=".72"/>
<path d="M184.5 95H663.5 M184.5 117.3H663.5 M184.5 140.7H663.5 M184.5 164.3H663.5 M184.5 187.8H663.5 M184.5 211.3H663.5 M184.5 234.3H663.5 M184.5 251.3H663.5 M184.5 266.8H663.5 M184.5 286.2H663.5 M184.5 301.7H663.5 M184.5 313H663.5" stroke="#8c98a8" stroke-width=".9" stroke-dasharray="2.5 1.8" fill="none" opacity=".72"/>
<path d="M299.3 94.5V313.5 M471.4 94.5V313.5" stroke="#fff" stroke-width="1" stroke-dasharray="2.5 1.8" fill="none" opacity=".9"/>
<path d="M184.5 125.5H663.5" stroke="#8492a2" stroke-width="1"/>
<path d="M185.3 173.16V188.75 M191.03 184.59V190.83 M196.76 183.56V190.83 M202.49 185.01V188.34 M208.22 186.67V192.91 M213.95 190.83V195.61 M219.68 192.91V206.42 M225.41 200.19V206.01 M231.14 198.11V204.35 M236.87 197.69V202.27 M234.87 199.36H238.87 M242.6 198.11V206.42 M248.33 198.11V204.35 M254.06 200.19V211 M259.79 199.15V204.76 M265.52 200.19V205.38 M271.25 201.23V206.01 M276.98 191.87V206.42 M282.71 187.71V198.11 M288.44 180.44V201.23 M294.17 181.48V191.87 M299.9 178.98V189.79 M305.63 175.24V182.93 M311.36 180.02V189.79 M317.09 170.67V185.63 M322.82 162.35V177.32 M328.55 141.98V164.84 M334.28 145.09V153.41 M340.01 144.47V150.71 M338.01 148.73H342.01 M345.74 133.66V152.37 M343.74 149.25H347.74 M351.47 140.94V156.53 M357.2 139.9V158.61 M362.93 139.9V152.37 M368.66 141.98V148.63 M374.39 139.9V145.09 M372.39 143.33H376.39 M380.12 131.16V144.47 M385.85 121.19V146.55 M391.58 125.34V156.53 M397.31 153.41V161.73 M403.04 155.49V162.35 M408.77 154.45V160.69 M414.5 150.71V160.69 M420.23 120.15V171.5 M425.96 124.3V150.29 M431.69 125.76V139.9 M437.42 133.24V138.23 M435.42 135.32H439.42 M443.15 134.7V140.52 M448.88 137.4V145.09 M446.88 139.9H450.88 M454.61 110.79V147.59 M460.34 101.43V121.19 M466.07 102.89V111.83 M471.8 109.75V117.44 M477.53 115.36V121.19 M483.26 119.11V130.12 M488.99 118.07V127.01 M494.72 114.53V128.88 M500.45 112.45V119.73 M506.18 115.36V119.52 M511.91 114.95V120.77 M509.91 116.61H513.91 M517.64 109.13V118.69 M515.64 117.03H519.64 M523.37 110.79V123.68 M529.1 108.71V120.77 M534.83 106.22V112.87 M532.83 111.21H536.83 M540.56 109.13V112.45 M546.29 107.67V111.83 M552.02 102.89V110.79 M550.02 108.71H554.02 M557.75 104.97V118.69 M563.48 111.83V129.5 M569.21 124.93V132.62 M574.94 126.26V132.56 M580.67 124.01V130.31 M586.4 121.76V130.76 M584.4 125.13H588.4" stroke="#00ff00" stroke-width=".9" fill="none"/><path d="M195.06 185.63h3.4v4.16h-3.4z M229.44 199.56h3.4v4.16h-3.4z M252.36 201.85h3.4v1.87h-3.4z M263.82 202.27h3.4v2.08h-3.4z M275.28 195.61h3.4v9.77h-3.4z M281.01 191.25h3.4v4.37h-3.4z M286.74 189.38h3.4v2.08h-3.4z M292.47 186.67h3.4v3.12h-3.4z M298.2 180.44h3.4v7.9h-3.4z M309.66 180.44h3.4v1.66h-3.4z M315.39 173.16h3.4v7.9h-3.4z M321.12 163.39h3.4v9.77h-3.4z M326.85 152.37h3.4v11.43h-3.4z M332.58 147.59h3.4v4.78h-3.4z M355.5 150.29h3.4v4.78h-3.4z M361.23 147.17h3.4v3.12h-3.4z M366.96 143.64h3.4v3.95h-3.4z M378.42 134.28h3.4v8.73h-3.4z M384.15 127.42h3.4v6.86h-3.4z M401.34 158.19h3.4v3.12h-3.4z M407.07 155.9h3.4v2.7h-3.4z M412.8 152.37h3.4v3.53h-3.4z M418.53 130.54h3.4v21.83h-3.4z M424.26 127.01h3.4v3.53h-3.4z M452.91 116.61h3.4v23.91h-3.4z M458.64 105.18h3.4v11.43h-3.4z M487.29 119.73h3.4v6.03h-3.4z M493.02 116.4h3.4v3.33h-3.4z M504.48 116.61h3.4v1.87h-3.4z M521.67 115.57h3.4v2.91h-3.4z M527.4 110.17h3.4v5.41h-3.4z M538.86 110.17h3.4v1.66h-3.4z M544.59 108.3h3.4v2.08h-3.4z M573.24 128.06h3.4v2.7h-3.4z M578.97 124.68h3.4v3.83h-3.4z" stroke="#00ff00" stroke-width=".8" fill="#000"/><path d="M183.6 176.28h3.4v11.43h-3.4z M189.33 186.67h3.4v3.12h-3.4z M200.79 185.63h3.4v2.08h-3.4z M206.52 187.71h3.4v4.57h-3.4z M212.25 191.46h3.4v3.53h-3.4z M217.98 194.57h3.4v7.69h-3.4z M223.71 202.27h3.4v1.66h-3.4z M240.9 199.56h3.4v2.7h-3.4z M246.63 202.27h3.4v1.46h-3.4z M258.09 201.64h3.4v2.7h-3.4z M269.55 202.27h3.4v2.7h-3.4z M303.93 180.85h3.4v1.25h-3.4z M349.77 148.84h3.4v6.65h-3.4z M389.88 127.84h3.4v26.2h-3.4z M395.61 154.45h3.4v6.65h-3.4z M429.99 127.42h3.4v8.32h-3.4z M441.45 135.74h3.4v4.16h-3.4z M464.37 105.59h3.4v3.74h-3.4z M470.1 112.45h3.4v3.95h-3.4z M475.83 116.4h3.4v4.16h-3.4z M481.56 120.56h3.4v4.78h-3.4z M498.75 116.4h3.4v2.7h-3.4z M556.05 108.3h3.4v6.65h-3.4z M561.78 114.95h3.4v10.4h-3.4z M567.51 125.76h3.4v3.74h-3.4z" stroke="#00ff00" stroke-width=".8" fill="#fff"/>
<rect x="184.5" y="212.85" width="479" height="3.1" fill="#000"/><path d="M184.5 213.3H663.5 M184.5 215.5H663.5" stroke="#d6d6d6" stroke-width=".9"/>
<rect x="184.5" y="242.95" width="479" height="3.1" fill="#000"/><path d="M184.5 243.4H663.5 M184.5 245.6H663.5" stroke="#d6d6d6" stroke-width=".9"/>
<rect x="184.5" y="271.95" width="479" height="3.1" fill="#000"/><path d="M184.5 272.4H663.5 M184.5 274.6H663.5" stroke="#d6d6d6" stroke-width=".9"/>
<path d="M185.3 234.3V233.75 M196.76 234.3V234.86 M202.49 234.3V235.79 M208.22 234.3V236.75 M213.95 234.3V237.62 M219.68 234.3V238.44 M225.41 234.3V239.26 M231.14 234.3V239.81 M236.87 234.3V240.31 M242.6 234.3V240.81 M248.33 234.3V241.09 M254.06 234.3V241.28 M259.79 234.3V241.47 M265.52 234.3V241.63 M271.25 234.3V241.63 M276.98 234.3V241.63 M282.71 234.3V241.57 M288.44 234.3V239.85 M294.17 234.3V238.13 M299.9 234.3V236.41 M305.63 234.3V234.8 M317.09 234.3V232.98 M322.82 234.3V231.55 M328.55 234.3V229.43 M334.28 234.3V227.49 M340.01 234.3V225.86 M345.74 234.3V224.26 M351.47 234.3V223.2 M357.2 234.3V222.13 M362.93 234.3V221.18 M368.66 234.3V220.51 M374.39 234.3V219.85 M380.12 234.3V218.95 M385.85 234.3V218.03 M391.58 234.3V220.09 M397.31 234.3V221.57 M403.04 234.3V222.05 M408.77 234.3V222.49 M414.5 234.3V222.3 M420.23 234.3V222.11 M425.96 234.3V221.9 M431.69 234.3V221.69 M437.42 234.3V221.47 M443.15 234.3V221.38 M448.88 234.3V221.38 M454.61 234.3V220.21 M460.34 234.3V219.09 M466.07 234.3V218.7 M471.8 234.3V219.33 M477.53 234.3V219.95 M483.26 234.3V220.53 M488.99 234.3V220.82 M494.72 234.3V220.99 M500.45 234.3V221.17 M506.18 234.3V221.34 M511.91 234.3V221.82 M517.64 234.3V222.39 M523.37 234.3V222.96 M529.1 234.3V223.54 M534.83 234.3V223.87 M540.56 234.3V224.15 M546.29 234.3V224.44 M552.02 234.3V224.73 M557.75 234.3V226.32 M563.48 234.3V228.04 M569.21 234.3V229.22 M574.94 234.3V230.36 M580.67 234.3V231.96 M586.4 234.3V233.08" stroke="#32a032" stroke-width="1.1" fill="none"/>
<polyline points="185.3,230.38 203.75,232.63 226.26,236 248.76,239.38 275.76,241.63 305.01,240.05 332.02,233.75 356.77,227 383.77,221.38 406.27,220.93 440.03,222.5 440,222.5 462.5,221.83 485,220.7 507.51,220.7 530.01,221.83 552.51,223.18 575.01,225.43 586.26,226.55" fill="none" stroke="#d41414" stroke-width="1.1" />
<polyline points="185.3,264.13 199.25,268.18 215,270.21 230.76,267.06 242.01,264.36 255.51,265.26 264.51,260.31 275.76,255.13 287.01,251.76 305.01,249.95 323.02,247.93 341.02,251.31 356.77,254.01 372.52,253.56 384.9,251.31 392.77,260.76 401.77,270.21 410.77,270.21 417.52,264.13 428.78,254.01 440.03,252.21 440,253.56 449,255.81 458,250.63 467,248.38 480.5,256.71 494.01,258.06 509.76,259.63 525.51,254.01 536.76,250.86 548.01,251.31 557.01,256.26 566.01,265.26 575.01,268.63 586.26,267.06" fill="none" stroke="#2ea62e" stroke-width="1" />
<polyline points="185.3,264.81 199.25,267.51 215,269.31 230.76,268.18 244.26,265.71 260.01,264.13 266.76,260.76 278.01,256.26 287.01,253.33 305.01,250.86 327.52,248.38 345.52,250.63 365.77,254.46 386.02,252.21 395.02,258.96 406.27,267.51 414.15,269.76 422.03,264.13 433.28,255.13 440.03,252.88 440,252.88 449,254.68 462.5,250.63 471.5,249.05 485,255.81 498.51,257.38 514.26,259.18 530.01,255.13 539.01,251.76 552.51,251.31 561.51,255.13 572.76,265.71 579.51,267.51 586.26,267.96" fill="none" stroke="#d41414" stroke-width="1" />
<polyline points="185.3,297.88 190.25,299.01 197,296.76 219.5,300.14 226.26,301.26 235.26,296.76 246.51,300.14 269.01,299.01 278.01,293.38 296.01,290.01 309.51,288.88 327.52,283.26 345.52,283.26 352.27,285.96 372.52,283.26 386.02,281.46 392.77,292.26 399.52,293.38 413.02,291.13 422.03,286.63 431.03,290.01 440.03,291.13 440,291.13 449,291.13 459.13,285.51 469.25,288.88 482.75,291.13 496.26,289.56 509.76,288.88 518.76,290.01 530.01,287.76 552.51,288.21 561.51,294.51 570.51,296.76 579.51,294.51 586.26,294.96" fill="none" stroke="#2ea62e" stroke-width="1" />
<polyline points="185.3,306.89 190.25,308.46 198.13,297.88 210.5,305.76 225.13,310.71 230.76,297.88 237.51,299.01 247.63,304.64 254.38,295.63 260.01,302.39 265.63,294.51 270.81,300.14 276.89,284.38 291.51,279.88 299.39,276.96 305.01,281.46 323.02,276.51 336.52,275.38 345.52,279.88 351.14,294.51 361.27,285.51 372.52,281.01 384.9,276.51 391.65,302.39 396.15,304.64 408.52,299.01 415.27,292.26 419.77,281.01 425.4,279.88 431.03,290.01 440.03,292.26 440,295.63 449,298.33 454.63,279.88 460.25,278.31 469.25,291.13 482.75,301.26 494.01,289.56 499.63,292.71 509.76,288.88 517.63,294.51 528.88,282.13 534.51,287.76 545.76,281.46 551.39,281.46 557.01,301.26 563.76,308.46 568.71,310.26 575.01,304.64 580.64,296.76 586.26,297.43" fill="none" stroke="#d41414" stroke-width="1" />
<path d="M184.5 94.5V313.5 H663.5 M663.5 94.5V313.5 M184.5 94.5H663.5" stroke="#e8e8e8" stroke-width="1" fill="none"/>
<path d="M184.5 313.5v2.4 M230.4 313.5v2.4 M276.3 313.5v2.4 M322.2 313.5v2.4 M368.1 313.5v2.4 M414 313.5v2.4 M459.9 313.5v2.4 M505.8 313.5v2.4 M551.7 313.5v2.4" stroke="#fff" stroke-width="1" fill="none"/>
<path d="M663.5 117.3h2.5 M663.5 140.7h2.5 M663.5 164.3h2.5 M663.5 187.8h2.5 M663.5 211.3h2.5" stroke="#fff" stroke-width="1" fill="none"/>
<path d="M562.8 94.5h6.4l-3.2 3.6z" fill="#a8b4c4"/>
<path d="M184.8 309v4h4z" fill="#7080a0"/>
<path d="M187.6 99.6h5l-2.5 3z" fill="#fff"/>
<text x="196" y="103.2" font-size="6.65" fill="#fff" text-anchor="start" >EURUSD,H4&#160; 1.12977 1.13036 1.12854 1.12971</text>
<text x="668" y="119.4" font-size="6.65" fill="#fff" text-anchor="start" >1.13155</text>
<text x="668" y="142.8" font-size="6.65" fill="#fff" text-anchor="start" >1.12645</text>
<text x="668" y="166.4" font-size="6.65" fill="#fff" text-anchor="start" >1.12150</text>
<text x="668" y="189.9" font-size="6.65" fill="#fff" text-anchor="start" >1.11640</text>
<text x="668" y="213.4" font-size="6.65" fill="#fff" text-anchor="start" >1.11145</text>
<rect x="665" y="121.2" width="29.5" height="8" fill="#fff"/><text x="666.5" y="128" font-size="6.65" fill="#000" text-anchor="start" >1.12971</text>
<text x="187.5" y="223.5" font-size="6.65" fill="#fff" text-anchor="start" >MACD(12,26,9) 0.000563 0.001373</text>
<text x="187.5" y="254.5" font-size="6.65" fill="#fff" text-anchor="start" >Stoch(8,3,3) 21.1675 16.2250</text>
<text x="187.5" y="282.5" font-size="6.65" fill="#fff" text-anchor="start" >RSI(13) 48.0823&#160; RSI(3) 41.3573</text>
<text x="666" y="223.3" font-size="6.65" fill="#fff" text-anchor="start" >0.003181</text>
<text x="666" y="237" font-size="6.65" fill="#fff" text-anchor="start" >0.00</text>
<text x="666" y="242" font-size="6.65" fill="#fff" text-anchor="start" >-0.001513</text>
<text x="666" y="253" font-size="6.65" fill="#fff" text-anchor="start" >100</text>
<text x="666" y="253.4" font-size="6.65" fill="#fff" text-anchor="start" >80</text>
<text x="666" y="269.6" font-size="6.65" fill="#fff" text-anchor="start" >20</text>
<text x="666" y="269.8" font-size="6.65" fill="#fff" text-anchor="start" >0</text>
<text x="666" y="281.5" font-size="6.65" fill="#fff" text-anchor="start" >100</text>
<text x="666" y="289" font-size="6.65" fill="#fff" text-anchor="start" >70</text>
<text x="666" y="304.5" font-size="6.65" fill="#fff" text-anchor="start" >30</text>
<text x="666" y="311" font-size="6.65" fill="#fff" text-anchor="start" >0</text>
<text x="183.5" y="322.6" font-size="6.65" fill="#fff" text-anchor="start" >28 May 2019</text>
<text x="229.4" y="322.6" font-size="6.65" fill="#fff" text-anchor="start" >30 May 00:00</text>
<text x="275.3" y="322.6" font-size="6.65" fill="#fff" text-anchor="start" >31 May 08:00</text>
<text x="321.2" y="322.6" font-size="6.65" fill="#fff" text-anchor="start" >3 Jun 16:00</text>
<text x="367.1" y="322.6" font-size="6.65" fill="#fff" text-anchor="start" >5 Jun 00:00</text>
<text x="413" y="322.6" font-size="6.65" fill="#fff" text-anchor="start" >6 Jun 08:00</text>
<text x="458.9" y="322.6" font-size="6.65" fill="#fff" text-anchor="start" >7 Jun 16:00</text>
<text x="504.8" y="322.6" font-size="6.65" fill="#fff" text-anchor="start" >11 Jun 00:00</text>
<text x="550.7" y="322.6" font-size="6.65" fill="#fff" text-anchor="start" >12 Jun 08:00</text>
</g>
<g font-family='&quot;DejaVu Sans Condensed&quot;,&quot;DejaVu Sans&quot;,&quot;Liberation Sans&quot;,sans-serif'>
<path d="M2.2 33V47" stroke="#b4b4b4" stroke-width="1.6" stroke-dasharray="1.3 1.5"/>
<rect x="8.5" y="35.5" width="9" height="8" fill="#e9f1fb" stroke="#3f78bd" stroke-width="1"/><path d="M10 38.5h4M10 40.8h3" stroke="#6f9bd0" stroke-width=".8"/>
<path d="M14.5 38h3v2.8h2.8v3h-2.8v2.8h-3v-2.8h-2.8v-3h2.8z" fill="#3fd33f" stroke="#14901a" stroke-width=".9" stroke-linejoin="round"/>
<path d="M23 40h4.4l-2.2 2.6z" fill="#111"/>
<rect x="37.5" y="39.5" width="9.5" height="7" rx="1" fill="#d6e6f8" stroke="#4d86c6" stroke-width="1"/>
<rect x="34.5" y="35.5" width="9.5" height="7.5" rx="1" fill="#edf4fc" stroke="#4d86c6" stroke-width="1"/><path d="M36.5 40.2h5.5" stroke="#6f9bd0" stroke-width=".8"/>
<path d="M50 40h4.4l-2.2 2.6z" fill="#111"/>
<path d="M59.5 33V47" stroke="#a6a6a6" stroke-width="1"/><path d="M60.5 33V47" stroke="#fff" stroke-width="1"/>
<rect x="63.5" y="32.5" width="17" height="15.5" fill="#f9f9f9" stroke="#d6d6d6" stroke-width="1"/><path d="M63.5 48v-15.5h17" stroke="#bdbdbd" stroke-width="1" fill="none"/>
<rect x="66.5" y="35.5" width="10.5" height="10.5" rx="1" fill="#fff" stroke="#5b97dc" stroke-width="1.2"/>
<path d="M70 36.8l2.2 2.3h-1.3v1.7h-1.8v-1.7h-1.3z" fill="#35b535" stroke="#1e8c1e" stroke-width=".5"/>
<path d="M73.5 45l2.2 -2.3h-1.3v-1.7h-1.8v1.7h-1.3z" fill="#f07a3a" stroke="#c8401a" stroke-width=".5"/>
<circle cx="91.5" cy="41" r="3.5" fill="none" stroke="#8a8a8a" stroke-width="1.1"/><path d="M91.5 35.8v10.4M86.3 41h10.4" stroke="#8a8a8a" stroke-width=".9"/>
<path d="M105.5 37.5h3l1 1.2h5v5.5h-9z" fill="#f6dc7c" stroke="#c9a030" stroke-width=".9"/>
<path d="M113.2 39.6l1.3 2.6 2.9.4-2.1 2 .5 2.9-2.6-1.4-2.6 1.4.5-2.9-2.1-2 2.9-.4z" fill="#fbd24a" stroke="#c98a10" stroke-width=".7"/>
<path d="M108.5 44.5v2.5" stroke="#777" stroke-width=".8"/>
<rect x="126.5" y="36.5" width="11.5" height="9.5" rx="1" fill="#fdfdfd" stroke="#4f88cc" stroke-width="1.1"/><rect x="127.2" y="37.2" width="2.4" height="8.1" fill="#5a94d8"/><path d="M130.5 39.5h7" stroke="#d77" stroke-width=".7"/>
<rect x="146.5" y="35.5" width="8" height="9" fill="#f4f4f4" stroke="#b09a80" stroke-width=".9"/>
<path d="M155.3 44l2.6 2.9" stroke="#d9a520" stroke-width="2" stroke-linecap="round"/><circle cx="153" cy="41.5" r="3.3" fill="#e4f0fc" stroke="#4a8ed6" stroke-width="1.2"/>
<path d="M164.5 33V47" stroke="#a6a6a6" stroke-width="1"/><path d="M165.5 33V47" stroke="#fff" stroke-width="1"/>
<path d="M171 35.3h6l2.5 2.5v7.5h-8.5z" fill="#fafafa" stroke="#8a8a8a" stroke-width=".9"/><path d="M172.7 38.5h4M172.7 40.7h4" stroke="#9a9a9a" stroke-width=".8"/>
<path d="M177.8 40.1h2.8v2.3h2.3v2.8h-2.3v2.3h-2.8v-2.3h-2.3v-2.8h2.3z" fill="#3fd33f" stroke="#14901a" stroke-width=".9" stroke-linejoin="round"/>
<path d="M245.3 42.2l6.2-6.7 6.8 4.6-4.6 6.8z" fill="#e6b432" stroke="#b07c12" stroke-width=".8"/><path d="M245.6 43.3l7.9 4.6 4.6-6.6" fill="none" stroke="#8a5a0c" stroke-width="1.3"/><path d="M247.5 42l4.3-4.6" stroke="#f9e6a8" stroke-width="1"/>
<rect x="267" y="35" width="7" height="7" rx="1" fill="#6aa6e6" stroke="#2f6fb8" stroke-width=".8"/><path d="M264.5 46.5a3 3 0 0 1 2.5-4.5a3.5 3.5 0 0 1 6 0a3 3 0 0 1 2.6 4.5z" fill="#e8eef8" stroke="#8aa0c0" stroke-width=".8"/>
<circle cx="290" cy="41" r="5.6" fill="#e6eef6" stroke="#9fb4c8" stroke-width="1"/><circle cx="290" cy="41" r="3" fill="none" stroke="#6f9fc8" stroke-width="1"/><path d="M290 41.5v5" stroke="#2a9a2a" stroke-width="2"/><circle cx="290" cy="41" r="1.4" fill="#2a9a2a"/>
<path d="M305.5 39.5a6 3 0 0 1 12 0v1h-12z" fill="#5b9be0" stroke="#2f6fb8" stroke-width=".7"/><path d="M306.5 40.5h10l-1 6h-8z" fill="#f6cf50" stroke="#c99a20" stroke-width=".8"/>
<circle cx="315.2" cy="44.3" r="2.9" fill="#e8452c" stroke="#fff" stroke-width=".9"/>
<path d="M385 33V47" stroke="#a6a6a6" stroke-width="1"/><path d="M386 33V47" stroke="#fff" stroke-width="1"/>
<path d="M388.6 33V47" stroke="#b4b4b4" stroke-width="1.6" stroke-dasharray="1.3 1.5"/>
<path d="M397 35.5v10.5M394.5 44.5h11" stroke="#8a8f98" stroke-width="1.7" fill="none"/>
<path d="M401.5 37v7.5M401.5 38h2M399.5 43h2" stroke="#2a9a2a" stroke-width="1.3" fill="none"/>
<rect x="411" y="32.5" width="17" height="15.5" fill="#f9f9f9" stroke="#d6d6d6" stroke-width="1"/><path d="M411 48v-15.5h17" stroke="#bdbdbd" stroke-width="1" fill="none"/>
<path d="M416.5 35.5v10.5M414 44.5h11" stroke="#8a8f98" stroke-width="1.7" fill="none"/>
<path d="M421.3 34.5v11" stroke="#2a9a2a" stroke-width="1"/><rect x="419.6" y="36.5" width="3.4" height="6" rx="1" fill="#35c535" stroke="#1e8c1e" stroke-width=".7"/>
<path d="M436.5 35.5v10.5M434 44.5h11" stroke="#8a8f98" stroke-width="1.7" fill="none"/>
<path d="M436.5 42.5q3.5-7 8.5-1" stroke="#2a9a2a" stroke-width="1.1" fill="none"/>
<path d="M452 33V47" stroke="#a6a6a6" stroke-width="1"/><path d="M453 33V47" stroke="#fff" stroke-width="1"/>
<path d="M465.3 42.3l3.4 3.7" stroke="#d9a520" stroke-width="2.2" stroke-linecap="round"/><circle cx="462.5" cy="39.3" r="4" fill="#e4f0fc" stroke="#4a8ed6" stroke-width="1.3"/><path d="M460 39.3h5M462.5 36.8v5" stroke="#2f78c8" stroke-width="1.3"/>
<path d="M485.3 42.3l3.4 3.7" stroke="#d9a520" stroke-width="2.2" stroke-linecap="round"/><circle cx="482.5" cy="39.3" r="4" fill="#e4f0fc" stroke="#4a8ed6" stroke-width="1.3"/><path d="M480 39.3h5" stroke="#2f78c8" stroke-width="1.3"/>
<rect x="497.5" y="35.5" width="5.8" height="5" fill="#58b030" stroke="#3a8a1a" stroke-width=".6"/><rect x="504.2" y="35.5" width="5.8" height="5" fill="#3a80d8" stroke="#2560b0" stroke-width=".6"/>
<rect x="497.5" y="41.5" width="5.8" height="5" fill="#3a80d8" stroke="#2560b0" stroke-width=".6"/><rect x="504.2" y="41.5" width="5.8" height="5" fill="#58b030" stroke="#3a8a1a" stroke-width=".6"/>
<path d="M498.7 38.3h3.4M505.4 38.3h3.4M498.7 44.3h3.4M505.4 44.3h3.4" stroke="#fff" stroke-width="1.6" opacity=".8"/>
<path d="M516.5 33V47" stroke="#a6a6a6" stroke-width="1"/><path d="M517.5 33V47" stroke="#fff" stroke-width="1"/>
<path d="M525.5 35.5v10.5M523 44.5h11" stroke="#8a8f98" stroke-width="1.7" fill="none"/>
<path d="M529.5 37.5l3.4 3-3.4 3z" fill="#35b535" stroke="#1e8c1e" stroke-width=".6"/>
<rect x="540.5" y="32.5" width="17.5" height="15.5" fill="#f9f9f9" stroke="#d6d6d6" stroke-width="1"/><path d="M540.5 48v-15.5h17.5" stroke="#bdbdbd" stroke-width="1" fill="none"/>
<path d="M546 35.5v10.5M543.5 44.5h11" stroke="#8a8f98" stroke-width="1.7" fill="none"/>
<path d="M550.5 35v9.5" stroke="#3a78c8" stroke-width="1"/><path d="M555 40.5h-3.5m1.7-1.8l-1.9 1.8 1.9 1.8" stroke="#d8502a" stroke-width="1.1" fill="none"/>
<path d="M561 33V47" stroke="#a6a6a6" stroke-width="1"/><path d="M562 33V47" stroke="#fff" stroke-width="1"/>
<path d="M567.5 35.3h6l2.5 2.5v7.5h-8.5z" fill="#fafafa" stroke="#8a8a8a" stroke-width=".9"/><path d="M569.2 38.5h4M569.2 40.7h4" stroke="#9a9a9a" stroke-width=".8"/>
<path d="M574.3 40.1h2.8v2.3h2.3v2.8h-2.3v2.3h-2.8v-2.3h-2.3v-2.8h2.3z" fill="#3fd33f" stroke="#14901a" stroke-width=".9" stroke-linejoin="round"/>
<path d="M582.5 40h4.4l-2.2 2.6z" fill="#111"/>
<circle cx="598.7" cy="40.7" r="5.2" fill="#f4f8fc" stroke="#2a6cc0" stroke-width="1.8"/><path d="M598.7 37.5v3.4h2.6" stroke="#555" stroke-width=".9" fill="none"/>
<path d="M609 40h4.4l-2.2 2.6z" fill="#111"/>
<rect x="619.5" y="36" width="12" height="10" fill="#fafcff" stroke="#3f78bd" stroke-width="1.2"/><path d="M619.5 37h12" stroke="#3f78bd" stroke-width="1.6"/><path d="M621 41l3-1 3 .5 3.5-1.5" stroke="#d8502a" stroke-width=".9" fill="none"/><path d="M621.5 44.5l2-1.5 2 1 2-1.5 2 1.5" stroke="#2a9a2a" stroke-width=".9" fill="none"/>
<path d="M635.5 40h4.4l-2.2 2.6z" fill="#111"/>
<path d="M0 49.5H644V31.5" stroke="#cfcfcf" stroke-width="1" fill="none"/>
<circle cx="1171" cy="38.2" r="2.9" fill="#e8f2fc" stroke="#3a84d8" stroke-width="1.5"/><path d="M1169 40.5l-3 3.4" stroke="#2f78d0" stroke-width="1.9" stroke-linecap="round"/>
<path d="M1189.5 37.7a4.5 3 0 0 1 9 0a4.5 3 0 0 1 -4.5 3l-2 2v-2.2a4.5 3 0 0 1 -2.5 -2.8z" fill="#f0f0f0" stroke="#a0a0a0" stroke-width=".9"/>
<path d="M1183.5 40.7a4.2 2.9 0 0 1 8.4 0a4.2 2.9 0 0 1 -3.5 2.9l-2.5 2.1v-2.4a4.2 2.9 0 0 1 -2.4 -2.6z" fill="#f6f6f6" stroke="#a0a0a0" stroke-width=".9"/>
<path d="M2.2 52V66" stroke="#b4b4b4" stroke-width="1.6" stroke-dasharray="1.3 1.5"/>
<rect x="6.5" y="51.5" width="14" height="15.5" fill="#f9f9f9" stroke="#d6d6d6" stroke-width="1"/><path d="M6.5 67v-15.5h14" stroke="#bdbdbd" stroke-width="1" fill="none"/>
<path d="M11.3 55v8.2l1.9-1.8 1.5 3.2 1.1-.5-1.5-3.1h2.5z" fill="#444" stroke="#333" stroke-width=".3"/>
<path d="M34.7 54.8v10M29.6 59.8h10.2" stroke="#666" stroke-width=".9"/>
<path d="M46.7 52V66" stroke="#a6a6a6" stroke-width="1"/><path d="M47.7 52V66" stroke="#fff" stroke-width="1"/>
<path d="M59.2 55.5v10" stroke="#777" stroke-width="1.3"/>
<path d="M75 60.3h8.8" stroke="#555" stroke-width="1.1"/>
<path d="M95 65.2l9-9" stroke="#666" stroke-width="1"/>
<path d="M114.5 64l7.5-7M117.5 65.2l7.5-7M116 60.5l4 3M118.5 58l4 3" stroke="#555" stroke-width=".9"/>
<text x="122.3" y="66.8" font-size="4.6" font-weight="bold" fill="#444">E</text>
<path d="M134.5 56h9.5M134.5 58.7h9.5M134.5 61.4h9.5M134.5 64h6" stroke="#666" stroke-width=".9" stroke-dasharray="2.5 .8"/>
<text x="141.7" y="66.8" font-size="4.6" font-weight="bold" fill="#444">F</text>
<text x="156" y="63.8" font-size="9.2" fill="#6e6e6e" font-family='"Liberation Sans",sans-serif'>A</text>
<rect x="175" y="55.5" width="9.5" height="9.5" fill="none" stroke="#777" stroke-width=".9" stroke-dasharray="1.2 1"/>
<text x="176.6" y="63.9" font-size="9" fill="#444" font-family='"Liberation Serif",serif'>T</text>
<path d="M194.5 57.8l3-2.6 3 2.6zM198.5 61.6l3 2.8 3-2.8z" fill="#444"/><path d="M195 59.5l8 3" stroke="#888" stroke-width=".8"/>
<path d="M207.5 59.5h4.4l-2.2 2.6z" fill="#111"/>
<path d="M217.2 52V66" stroke="#a6a6a6" stroke-width="1"/><path d="M218.2 52V66" stroke="#fff" stroke-width="1"/>
<path d="M220.7 52V66" stroke="#b4b4b4" stroke-width="1.6" stroke-dasharray="1.3 1.5"/>
<rect x="322.5" y="51.5" width="18.5" height="15.5" fill="#f9f9f9" stroke="#d6d6d6" stroke-width="1"/><path d="M322.5 67v-15.5h18.5" stroke="#bdbdbd" stroke-width="1" fill="none"/>
<path d="M403.3 50.5V68" stroke="#a8a8a8" stroke-width="1"/>
<text x="226.3" y="62.7" font-size="7.2" fill="#4a4a4a">M1</text>
<text x="246.10000000000002" y="62.7" font-size="7.2" fill="#4a4a4a">M5</text>
<text x="264.3" y="62.7" font-size="7.2" fill="#4a4a4a">M15</text>
<text x="284.8" y="62.7" font-size="7.2" fill="#4a4a4a">M30</text>
<text x="308.1" y="62.7" font-size="7.2" fill="#4a4a4a">H1</text>
<text x="326.6" y="62.7" font-size="7.2" fill="#4a4a4a">H4</text>
<text x="346.3" y="62.7" font-size="7.2" fill="#4a4a4a">D1</text>
<text x="366.3" y="62.7" font-size="7.2" fill="#4a4a4a">W1</text>
<text x="386.1" y="62.7" font-size="7.2" fill="#4a4a4a">MN</text>
</g>
<path d="M9.6 110.1l3.2 -3.3h-1.9v-2.5h-2.6v2.5h-1.9z" fill="#f4683a" stroke="#b83a14" stroke-width=".9" stroke-linejoin="round"/>
<path d="M9.6 118.41l3.2 3.3h-1.9v2.5h-2.6v-2.5h-1.9z" fill="#44d044" stroke="#1a861a" stroke-width=".9" stroke-linejoin="round"/>
<path d="M9.6 138.72l3.2 -3.3h-1.9v-2.5h-2.6v2.5h-1.9z" fill="#f4683a" stroke="#b83a14" stroke-width=".9" stroke-linejoin="round"/>
<path d="M9.6 153.03l3.2 -3.3h-1.9v-2.5h-2.6v2.5h-1.9z" fill="#f4683a" stroke="#b83a14" stroke-width=".9" stroke-linejoin="round"/>
<path d="M9.6 167.34l3.2 -3.3h-1.9v-2.5h-2.6v2.5h-1.9z" fill="#f4683a" stroke="#b83a14" stroke-width=".9" stroke-linejoin="round"/>
<path d="M9.6 181.65l3.2 -3.3h-1.9v-2.5h-2.6v2.5h-1.9z" fill="#f4683a" stroke="#b83a14" stroke-width=".9" stroke-linejoin="round"/>
<path d="M9.6 189.96l3.2 3.3h-1.9v2.5h-2.6v-2.5h-1.9z" fill="#44d044" stroke="#1a861a" stroke-width=".9" stroke-linejoin="round"/>
<path d="M9.6 204.27l3.2 3.3h-1.9v2.5h-2.6v-2.5h-1.9z" fill="#44d044" stroke="#1a861a" stroke-width=".9" stroke-linejoin="round"/>
<path d="M9.6 218.58l3.2 3.3h-1.9v2.5h-2.6v-2.5h-1.9z" fill="#44d044" stroke="#1a861a" stroke-width=".9" stroke-linejoin="round"/>
<path d="M9.6 232.89l3.2 3.3h-1.9v2.5h-2.6v-2.5h-1.9z" fill="#44d044" stroke="#1a861a" stroke-width=".9" stroke-linejoin="round"/>
<path d="M9.6 247.2l3.2 3.3h-1.9v2.5h-2.6v-2.5h-1.9z" fill="#44d044" stroke="#1a861a" stroke-width=".9" stroke-linejoin="round"/>
<path d="M9.6 261.51l3.2 3.3h-1.9v2.5h-2.6v-2.5h-1.9z" fill="#44d044" stroke="#1a861a" stroke-width=".9" stroke-linejoin="round"/>
<path d="M9.6 275.82l3.2 3.3h-1.9v2.5h-2.6v-2.5h-1.9z" fill="#44d044" stroke="#1a861a" stroke-width=".9" stroke-linejoin="round"/>
<path d="M9.6 290.13l3.2 3.3h-1.9v2.5h-2.6v-2.5h-1.9z" fill="#44d044" stroke="#1a861a" stroke-width=".9" stroke-linejoin="round"/>
<path d="M9.6 310.44l3.2 -3.3h-1.9v-2.5h-2.6v2.5h-1.9z" fill="#f4683a" stroke="#b83a14" stroke-width=".9" stroke-linejoin="round"/>
<path d="M9.6 324.75l3.2 -3.3h-1.9v-2.5h-2.6v2.5h-1.9z" fill="#f4683a" stroke="#b83a14" stroke-width=".9" stroke-linejoin="round"/>
<path d="M9.6 339.06l3.2 -3.3h-1.9v-2.5h-2.6v2.5h-1.9z" fill="#f4683a" stroke="#b83a14" stroke-width=".9" stroke-linejoin="round"/>
<path d="M9.6 347.37l3.2 3.3h-1.9v2.5h-2.6v-2.5h-1.9z" fill="#44d044" stroke="#1a861a" stroke-width=".9" stroke-linejoin="round"/>
<path d="M9.6 361.68l3.2 3.3h-1.9v2.5h-2.6v-2.5h-1.9z" fill="#44d044" stroke="#1a861a" stroke-width=".9" stroke-linejoin="round"/>
<path d="M9.6 375.99l3.2 3.3h-1.9v2.5h-2.6v-2.5h-1.9z" fill="#44d044" stroke="#1a861a" stroke-width=".9" stroke-linejoin="round"/>
<path d="M9.6 390.3l3.2 3.3h-1.9v2.5h-2.6v-2.5h-1.9z" fill="#44d044" stroke="#1a861a" stroke-width=".9" stroke-linejoin="round"/>
<path d="M9.6 404.61l3.2 3.3h-1.9v2.5h-2.6v-2.5h-1.9z" fill="#44d044" stroke="#1a861a" stroke-width=".9" stroke-linejoin="round"/>
<path d="M9.6 424.92l3.2 -3.3h-1.9v-2.5h-2.6v2.5h-1.9z" fill="#f4683a" stroke="#b83a14" stroke-width=".9" stroke-linejoin="round"/>
<path d="M9.6 433.23l3.2 3.3h-1.9v2.5h-2.6v-2.5h-1.9z" fill="#44d044" stroke="#1a861a" stroke-width=".9" stroke-linejoin="round"/>
<path d="M9.6 453.54l3.2 -3.3h-1.9v-2.5h-2.6v2.5h-1.9z" fill="#f4683a" stroke="#b83a14" stroke-width=".9" stroke-linejoin="round"/>
<rect x="1.5" y="2" width="10" height="10.5" rx="1" fill="#2a62b4"/><path d="M4 10.5v-6.5h5v3.3h-3.6M5.4 8.7h3.6" stroke="#fff" stroke-width="1.2" fill="none"/>
<rect x="1127.5" y="-3" width="74" height="15.5" rx="3" fill="url(#gTBtn)" stroke="#4d5068" stroke-width="1"/>
<rect x="1166" y="-3" width="36" height="15" rx="2" fill="url(#gTClose)" stroke="#6a3030" stroke-width=".8"/>
<path d="M1147.5 -1v13M1166 -1v13" stroke="#55586e" stroke-width=".9"/>
<path d="M1128.5 -1v11.5M1148.5 -1v12M1167 -1v12" stroke="#fff" stroke-opacity=".35" stroke-width=".8"/>
<rect x="1133.8" y="6" width="7.5" height="2.7" rx=".8" fill="#fff" stroke="#50546a" stroke-width=".6"/>
<path d="M1154.8 4.3v-2.1h5.4v4.9h-1.6" fill="none" stroke="#50546a" stroke-width="2"/><path d="M1154.8 4.3v-2.1h5.4v4.9h-1.6" fill="none" stroke="#fff" stroke-width="1.1"/>
<rect x="1152.6" y="4.3" width="5.4" height="5" rx=".5" fill="#6a6e88" stroke="#50546a" stroke-width="2"/><rect x="1152.6" y="4.3" width="5.4" height="5" rx=".5" fill="#6a6e88" stroke="#fff" stroke-width="1.2"/>
<path d="M1181 3.4l4.8 4.6m0-4.6l-4.8 4.6" stroke="#5a3030" stroke-width="3.2" stroke-linecap="square"/><path d="M1181 3.4l4.8 4.6m0-4.6l-4.8 4.6" stroke="#fff" stroke-width="1.9" stroke-linecap="square"/>
<rect x="2.2" y="15.2" width="277" height="15.2" fill="none" stroke="#f4151c" stroke-width="1.9"/>
<path d="M61.5 147L101.2 29.5" stroke="#f4151c" stroke-width="1.9"/>
<path d="M102.8 24.2l1.3 8.2-5.6-1.9z" fill="#f4151c"/>
</svg>
</body></html>
